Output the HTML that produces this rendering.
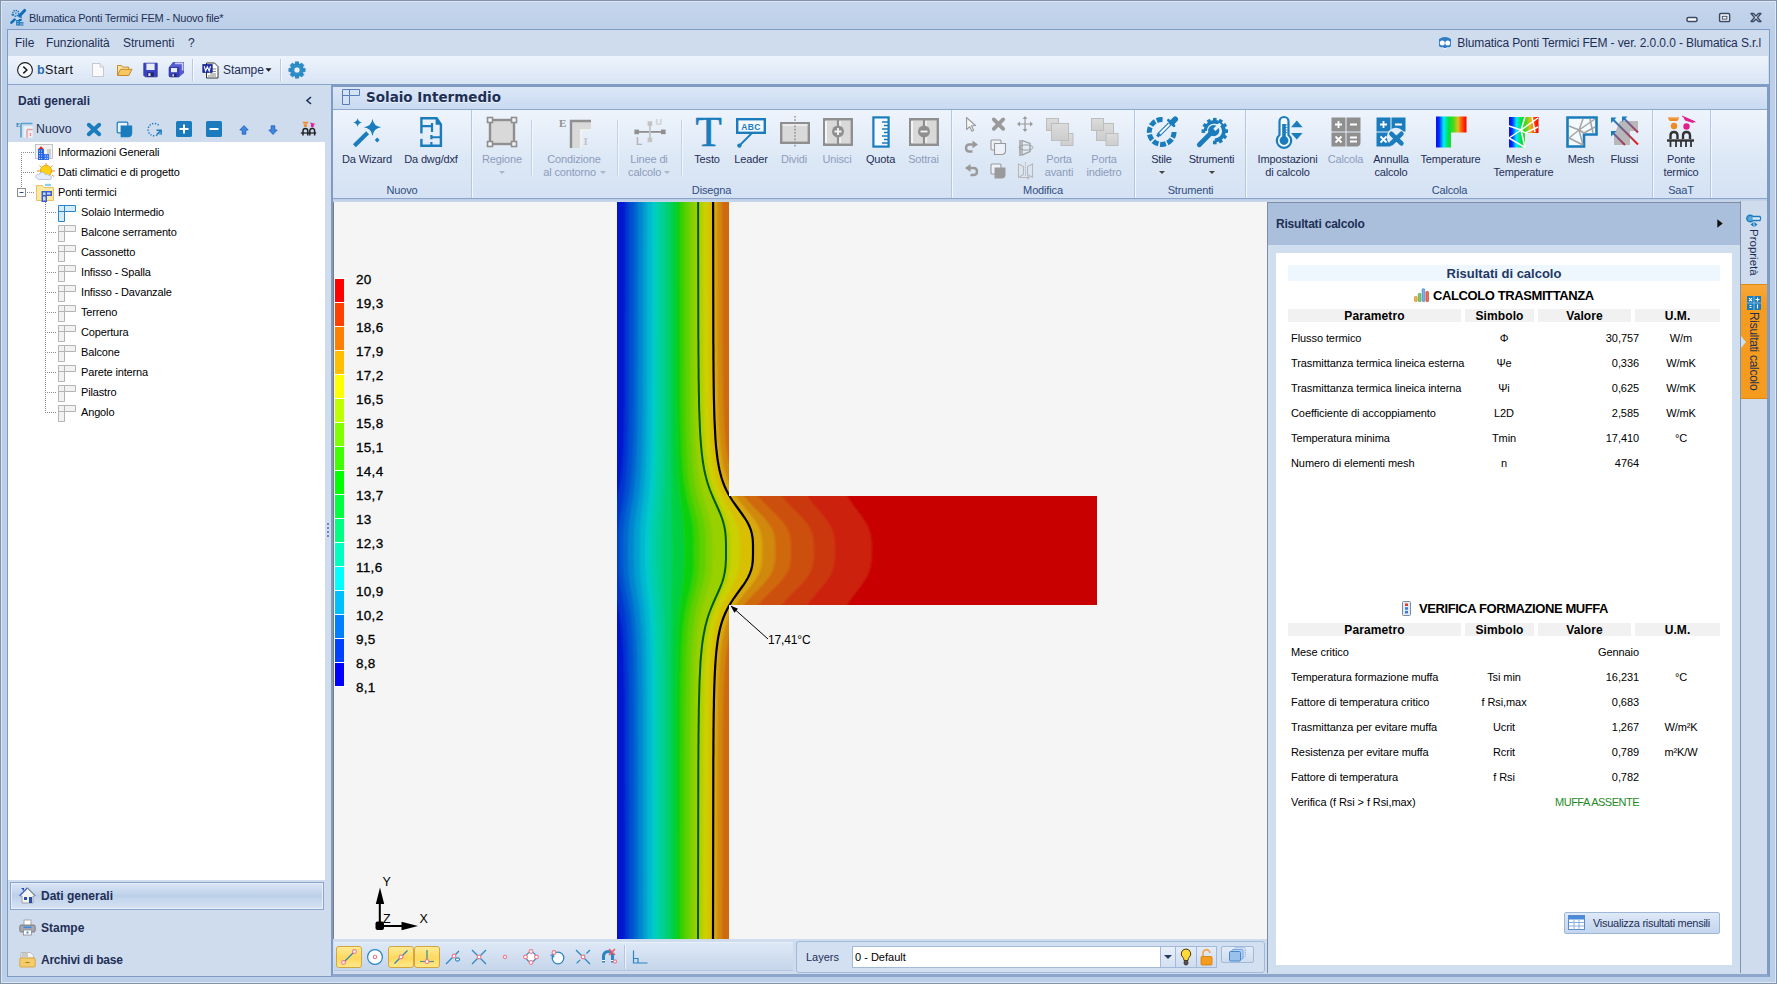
<!DOCTYPE html>
<html lang="it">
<head>
<meta charset="utf-8">
<title>Blumatica Ponti Termici FEM - Nuovo file*</title>
<style>
*{box-sizing:border-box;margin:0;padding:0}
html,body{width:1777px;height:984px;overflow:hidden}
body{position:relative;background:#bdd0e9;font-family:"Liberation Sans",sans-serif;font-size:11px;color:#1e1e1e;letter-spacing:-0.15px}
.abs{position:absolute}
.t{position:absolute;white-space:nowrap;line-height:14px}
.t12{font-size:12px;letter-spacing:0}
svg{position:absolute;overflow:visible}
/* window chrome */
#win{position:absolute;left:0;top:0;width:1777px;height:984px;border:1px solid #8593a8;box-shadow:inset 0 0 0 1px #dbe7f5;background:linear-gradient(#c5d6ed 0,#bccfe8 30px,#bccfe8 100%)}
#frame{position:absolute;left:7px;top:29px;width:1763px;height:948px;border:1px solid #7f9bc4;background:#cfdcee}
#menubar{position:absolute;left:8px;top:30px;width:1761px;height:26px;background:#cfdcee}
#toolbar{position:absolute;left:8px;top:56px;width:1760px;height:28px;background:linear-gradient(#eef4fc,#e3ecf8 50%,#d9e5f4)}
#tbline{position:absolute;left:8px;top:84px;width:1761px;height:1px;background:#8aa4cb}
.menu{color:#1e2f55}
/* left panel */
#left{position:absolute;left:8px;top:85px;width:323px;height:891px;background:#cfdcee}
#tree{position:absolute;left:9px;top:142px;width:316px;height:738px;background:#fff}
.tr{position:absolute;left:0;height:20px;white-space:nowrap;line-height:20px;color:#000}
.nav{position:absolute;left:10px;width:314px;height:28px}
.navb{position:absolute;left:31px;top:6px;font-size:12px;letter-spacing:0;color:#1e2f55;line-height:16px}
/* ribbon */
#main{position:absolute;left:331px;top:84px;width:1439px;height:893px;border-left:2px solid #7f9bc4;border-right:3px solid #809bc3;border-top:3px solid #819cc4;border-bottom:3px solid #8ca6cc;background:#cfdcee}
#hdr{position:absolute;left:333px;top:87px;width:1434px;height:22px;background:linear-gradient(#dbe7f7,#c9daf1)}
#ribbon{position:absolute;left:333px;top:110px;width:1434px;height:88px;background:linear-gradient(#eef4fc 0,#dde8f6 55%,#d5e2f3 100%)}
.rl{position:absolute;text-align:center;white-space:nowrap;line-height:13px;color:#1e2f55;transform:translateX(-50%)}
.rl.dis{color:#8d9cbb}
.gl{position:absolute;top:184px;text-align:center;white-space:nowrap;line-height:13px;color:#2f4d80;transform:translateX(-50%)}
.gs{position:absolute;top:110px;width:2px;height:88px;background:linear-gradient(90deg,#b4c7e1 50%,#f2f7fd 50%)}
.bs{position:absolute;top:120px;width:2px;height:56px;background:linear-gradient(90deg,#c3d2e7 50%,#f2f7fd 50%)}
/* canvas */
#canvas{position:absolute;left:333px;top:202px;width:934px;height:737px;background:#f5f5f5;border-left:1px solid #7c7c7c}
.lg{position:absolute;left:356px;font-size:13.5px;letter-spacing:.3px;-webkit-text-stroke:.3px #000;line-height:14px;color:#000;white-space:nowrap}
/* results */
#rp{position:absolute;left:1267px;top:202px;width:474px;height:771px;background:#d0dff0;border-left:1px solid #7d8ca3;border-top:1px solid #7d8ca3}
#rph{position:absolute;left:1268px;top:203px;width:473px;height:42px;background:#a9bfdc}
#rpw{position:absolute;left:1276px;top:253px;width:456px;height:712px;background:#fff}
.th{position:absolute;height:13px;background:#f1f1f1;text-align:center;font-weight:bold;font-size:12px;letter-spacing:.1px;line-height:14px;color:#000}
.c{position:absolute;white-space:nowrap;line-height:14px;color:#000;letter-spacing:-.08px}
.cc{transform:translateX(-50%)}
.cr{transform:translateX(-100%)}
</style>
</head>
<body>
<div id="win"></div>
<div id="frame"></div>
<!-- title bar -->
<svg style="left:10px;top:9px" width="17" height="17" viewBox="10 9 17 17">
 <circle cx="15.800" cy="13.300" r="2.900" fill="none" stroke="#0d6db8" stroke-width="1.500" stroke-dasharray="1.300 .9"/>
 <circle cx="15.800" cy="13.300" r="1" fill="#0d6db8" opacity=".6"/>
 <path d="M24.600 10.400l-5 5.400" stroke="#0d6db8" stroke-width="3" stroke-linecap="round"/>
 <path d="M19.800 15.500l1.800 2.400" stroke="#0d6db8" stroke-width="1.400"/>
 <path d="M14.600 19.600l-3.200 3" stroke="#0d6db8" stroke-width="2.600" stroke-linecap="round"/>
 <path d="M10.800 14.300l3.200.2-1.200 1.600z" fill="#0d6db8"/>
 <path d="M16.200 20h2.400l.5-1 2.600-.2v2l-2 .4v1h3.800v1.200h-3.800v1h3.800v1.200h-7.300z" fill="#0d6db8"/>
 <rect x="17.300" y="21.200" width="1.200" height="1.100" fill="#cfe0f4"/><rect x="17.300" y="23.300" width="1.200" height="1.100" fill="#cfe0f4"/>
</svg>
<div class="t" style="left:29px;top:11px;color:#1e2f55;letter-spacing:-.22px">Blumatica Ponti Termici FEM - Nuovo file*</div>
<svg style="left:1686px;top:11px" width="78" height="13" viewBox="0 0 78 13">
 <rect x="1" y="6.5" width="10" height="4" rx="1.5" fill="#fff" stroke="#3b4a66" stroke-width="1.5"/>
 <rect x="33.6" y="2.6" width="10" height="8" rx="1.2" fill="#fff" stroke="#3b4a66" stroke-width="1.5"/>
 <rect x="36.3" y="5.3" width="4.6" height="2.8" fill="#fff" stroke="#3b4a66" stroke-width="1"/>
 <path d="M65 2.5l2.5 0 2.5 2.6 2.5-2.6 2.5 0-3.6 4 3.6 4-2.5 0-2.5-2.6-2.5 2.6-2.5 0 3.6-4z" fill="#fff" stroke="#3b4a66" stroke-width="1.4" stroke-linejoin="round"/>
</svg>
<!-- menu bar -->
<div id="menubar"></div>
<div class="t t12 menu" style="left:15px;top:36px">File</div>
<div class="t t12 menu" style="left:46px;top:36px;letter-spacing:-.1px">Funzionalità</div>
<div class="t t12 menu" style="left:123px;top:36px">Strumenti</div>
<div class="t t12 menu" style="left:188px;top:36px">?</div>
<svg style="left:1437px;top:35px" width="16" height="16" viewBox="0 0 16 16">
 <path d="M2 4q6-4 12 0v7q-2 2-4 1l-2 2-2-2q-2 1-4-1z" fill="#2e7cc4"/>
 <circle cx="5.3" cy="8" r="2.5" fill="#fff"/><circle cx="10.7" cy="8" r="2.5" fill="#fff"/>
 <path d="M6 13h4l-2 2z" fill="#e8f0fa"/>
</svg>
<div class="t t12 menu" style="left:1761px;top:36px;transform:translateX(-100%);letter-spacing:-.115px">Blumatica Ponti Termici FEM - ver. 2.0.0.0 - Blumatica S.r.l</div>
<!-- toolbar -->
<div id="toolbar"></div>
<div id="tbline"></div>
<svg style="left:16px;top:61px" width="18" height="18" viewBox="0 0 18 18">
 <circle cx="9" cy="9" r="7.4" fill="#f6f9fd" stroke="#1a1a1a" stroke-width="1.1"/>
 <path d="M7.3 5.6l3.6 3.4-3.6 3.4" fill="none" stroke="#1a1a1a" stroke-width="1.5"/>
</svg>
<div class="t t12" style="left:37px;top:63px;font-size:12.5px;color:#111;letter-spacing:.4px"><b style="color:#2a6cb4">b</b>Start</div>
<svg style="left:91px;top:62px" width="14" height="16" viewBox="0 0 14 16">
 <path d="M1.5 1.5h7.5l3.5 3.5v9.5h-11z" fill="#fafafa" stroke="#c4c8cf" stroke-width="1"/>
 <path d="M9 1.5v3.5h3.5" fill="#e4e6ea" stroke="#c4c8cf" stroke-width=".8"/>
</svg>
<svg style="left:116px;top:63px" width="17" height="14" viewBox="0 0 17 14">
 <path d="M1.5 12.5v-10h4l1.2 1.6h6v2.2" fill="#fbe3a2" stroke="#c98a2c" stroke-width="1"/>
 <path d="M1.5 12.5l3-6.2h11.5l-3.2 6.2z" fill="#f7c765" stroke="#c98a2c" stroke-width="1" stroke-linejoin="round"/>
</svg>
<svg style="left:143px;top:62px" width="15" height="16" viewBox="0 0 15 16">
 <path d="M.8 1.2h13.4v13.6h-12l-1.4-1.4z" fill="#3b43c4" stroke="#2a2f9a" stroke-width=".8"/>
 <rect x="3.4" y="1.6" width="8.2" height="6.4" fill="#e9edf6"/>
 <rect x="4.2" y="10.4" width="6.8" height="4.2" fill="#23266e"/>
 <rect x="5.3" y="11.2" width="2.2" height="2.8" fill="#dfe3ee"/>
</svg>
<svg style="left:168px;top:61px" width="17" height="17" viewBox="0 0 17 17">
 <path d="M5 1h11v11l-5 4h-10v-10z" fill="#555bd0"/>
 <path d="M1 6.5h10v9.5h-8.8l-1.2-1.2z" fill="#3b43c4" stroke="#2a2f9a" stroke-width=".6"/>
 <rect x="3" y="7" width="6" height="4.2" fill="#e9edf6"/>
 <rect x="3.6" y="12.6" width="5" height="3.2" fill="#23266e"/>
 <rect x="4.4" y="13.2" width="1.6" height="2.2" fill="#dfe3ee"/>
 <path d="M7 2.4h7.6v7" fill="none" stroke="#c9ccf2" stroke-width="1.6"/>
</svg>
<div class="abs" style="left:192px;top:59px;width:2px;height:22px;background:linear-gradient(90deg,#b9c9e0 50%,#f6f9fd 50%)"></div>
<svg style="left:202px;top:62px" width="17" height="17" viewBox="0 0 17 17">
 <path d="M4.5 1h8l3.5 3.5v11.5h-11.5z" fill="#fdfdfd" stroke="#222" stroke-width=".9"/>
 <path d="M8 7h6M8 9.5h6M8 12h6M6 14h8" stroke="#555" stroke-width=".7"/>
 <rect x=".8" y="2.4" width="9.4" height="8.2" fill="#1f2fb4" stroke="#0c1470" stroke-width=".6"/>
 <path d="M2.3 4.2l1.3 4.8 1.8-4.2 1.8 4.2 1.3-4.8" fill="none" stroke="#fff" stroke-width="1.1"/>
</svg>
<div class="t t12" style="left:223px;top:63px;color:#1e2f55;font-size:12px;letter-spacing:-.1px">Stampe</div>
<svg style="left:265px;top:68px" width="7" height="4" viewBox="0 0 7 4"><path d="M.5 .3h6l-3 3.4z" fill="#1a1a1a"/></svg>
<div class="abs" style="left:280px;top:59px;width:2px;height:22px;background:linear-gradient(90deg,#b9c9e0 50%,#f6f9fd 50%)"></div>
<svg style="left:288px;top:61px" width="18" height="18" viewBox="0 0 18 18">
 <g fill="#2a93cf" stroke="#1a6ea6" stroke-width=".5">
 <path d="M7.400 .8h3.200l.5 2.600h-4.200z" transform="rotate(0 9 9)"/>
 <path d="M7.400 .8h3.200l.5 2.600h-4.200z" transform="rotate(45 9 9)"/>
 <path d="M7.400 .8h3.200l.5 2.600h-4.200z" transform="rotate(90 9 9)"/>
 <path d="M7.400 .8h3.200l.5 2.600h-4.200z" transform="rotate(135 9 9)"/>
 <path d="M7.400 .8h3.200l.5 2.600h-4.200z" transform="rotate(180 9 9)"/>
 <path d="M7.400 .8h3.200l.5 2.600h-4.200z" transform="rotate(225 9 9)"/>
 <path d="M7.400 .8h3.200l.5 2.600h-4.200z" transform="rotate(270 9 9)"/>
 <path d="M7.400 .8h3.200l.5 2.600h-4.200z" transform="rotate(315 9 9)"/>
 <circle cx="9" cy="9" r="6"/>
 </g>
 <circle cx="9" cy="9" r="3.1" fill="#e9f2fb" stroke="#1a6ea6" stroke-width=".6"/>
</svg>
<!-- left panel -->
<div id="left"></div>
<div class="abs" style="left:325px;top:142px;width:7px;height:738px;background:#cfdcee"></div>
<div class="t t12" style="left:18px;top:94px;font-weight:bold;color:#1e2f55">Dati generali</div>
<svg style="left:305px;top:96px" width="8" height="9" viewBox="0 0 8 9"><path d="M6 1l-4 3.5 4 3.5" fill="none" stroke="#1e2f55" stroke-width="1.6"/></svg>
<!-- left toolbar -->
<svg style="left:16px;top:121px" width="17" height="17" viewBox="0 0 17 17">
 <path d="M5 2.5h11.5M5 2.5v14" stroke="#5aa0d0" stroke-width="1.6" fill="none"/>
 <path d="M7.5 5h9v11.5h-9z" fill="#e4f3fb"/>
 <path d="M11 8.5h5.5M11 8.5v8" stroke="#ef9a9a" stroke-width="1.4" fill="none"/>
 <path d="M13 11h3.5v5.5h-3.5z" fill="#fdeaea"/>
 <text x="0" y="6" font-family="Liberation Serif,serif" font-size="6" font-weight="bold" fill="#2a7ab8">E</text>
 <text x="13.6" y="15" font-family="Liberation Serif,serif" font-size="5" font-weight="bold" fill="#e57373">I</text>
</svg>
<div class="t t12" style="left:36px;top:122px;color:#1e2f55;font-size:12.3px">Nuovo</div>
<svg style="left:86px;top:122px" width="16" height="15" viewBox="0 0 16 15"><path d="M2.800 2.800l10.400 9.400M13.200 2.800l-10.400 9.400" stroke="#1a7cbc" stroke-width="4" stroke-linecap="round"/></svg>
<svg style="left:116px;top:121px" width="17" height="17" viewBox="0 0 17 17">
 <rect x="1.2" y="1.2" width="10.6" height="10.6" rx="1" fill="#eaf3fb" stroke="#1a7cbc" stroke-width="1.2"/>
 <path d="M4.6 4.6h11.6v7.4q0 4.2-4.2 4.2h-7.4z" fill="#1a7cbc"/>
</svg>
<svg style="left:145px;top:121px" width="18" height="17" viewBox="0 0 18 17">
 <path d="M13.6 4.2a6.2 6.2 0 1 0 1 7.6" fill="none" stroke="#1a7cbc" stroke-width="1.5" stroke-dasharray="1.3 1.5"/>
 <path d="M11.5 9.2h4.6v4.6M15.8 9.5l-4 4" fill="none" stroke="#1a7cbc" stroke-width="1.5"/>
</svg>
<svg style="left:176px;top:121px" width="16" height="16" viewBox="0 0 16 16"><rect width="16" height="16" rx="1.6" fill="#1a7cbc"/><path d="M8 3.5v9M3.5 8h9" stroke="#fff" stroke-width="2"/></svg>
<svg style="left:206px;top:121px" width="16" height="16" viewBox="0 0 16 16"><rect width="16" height="16" rx="1.6" fill="#1a7cbc"/><path d="M3.5 8h9" stroke="#fff" stroke-width="2"/></svg>
<svg style="left:239px;top:125px" width="10" height="10" viewBox="0 0 10 10"><path d="M5 .6l4.2 4.4h-2.4v4.2h-3.6v-4.2h-2.4z" fill="#3a8ae0" stroke="#2458b8" stroke-width=".8"/></svg>
<svg style="left:268px;top:125px" width="10" height="10" viewBox="0 0 10 10"><path d="M5 9.4l4.2-4.4h-2.4v-4.2h-3.6v4.2h-2.4z" fill="#3a8ae0" stroke="#2458b8" stroke-width=".8"/></svg>
<svg style="left:300px;top:121px" width="17" height="16" viewBox="0 0 17 16">
 <path d="M2.5 .8h6l-1 2h-4z" fill="#f08a24"/><circle cx="5.4" cy="4.6" r="1.7" fill="#f08a24"/>
 <path d="M10 1.4l6 1.6-4.4 1.2z" fill="#e0208c"/><circle cx="12.4" cy="4.8" r="1.6" fill="#e0208c"/>
 <path d="M3 14.5v-4.5q0-2.6 2.4-2.6t2.4 2.6v4.5M9.8 14.5v-4.5q0-2.6 2.4-2.6t2.4 2.6v4.5" fill="none" stroke="#222" stroke-width="1.5"/>
 <path d="M.8 12h15.4" stroke="#222" stroke-width="1.3"/>
</svg>
<!-- tree -->
<div id="treepad" class="abs" style="left:8px;top:142px;width:1px;height:738px;background:#fff"></div>
<div id="tree">
<svg style="left:0;top:0" width="316" height="280">
 <g stroke="#8a8a8a" stroke-width="1" stroke-dasharray="1 1" fill="none">
  <path d="M12.5 10v36M14 10.500h11M14 30.500h11M18 50.500h7"/>
  <path d="M36.5 60v211M38 70.500h10M38 90.500h10M38 110.500h10M38 130.500h10M38 150.500h10M38 170.500h10M38 190.500h10M38 210.500h10M38 230.500h10M38 250.500h10M38 270.500h10"/>
 </g>
 <rect x="8.5" y="46.5" width="8" height="8" fill="#fff" stroke="#8e8e8e"/><path d="M10.5 50.5h4" stroke="#2a4a9a"/>
 <!-- info icon -->
 <g transform="translate(26,2)">
  <rect x=".5" y=".5" width="17" height="14" fill="#f3f3f3" stroke="#c4c4c4"/>
  <rect x="12" y="5" width="4" height="9" fill="#cfcfcf"/>
  <path d="M6 2.2l3 3h-6z" fill="#e02020"/>
  <rect x="3" y="5" width="6" height="11" fill="#2a66e0"/><rect x="9" y="10" width="5" height="6" fill="#3a76f0"/>
  <path d="M4 7h4M4 9.5h4M4 12h4M4 14.5h4M10 12h3M10 14.5h3" stroke="#bcd4ff" stroke-width="1" stroke-dasharray="1 1"/>
 </g>
 <!-- sun cloud -->
 <g transform="translate(26,21)">
  <g stroke="#f08a18" stroke-width="1"><path d="M11 0v3M4.5 2.5l2 2M17.500 2.5l-2 2M2 8h3M17 8h3M17 12l2 1.5"/></g>
  <circle cx="11" cy="8" r="5.6" fill="#ffd21a" stroke="#f0a010" stroke-width="1"/>
  <path d="M2 15.5q-2.400-1.200-1-3 1-1.600 3-.8 .6-2.600 3.400-2.400 2.400.2 3 2.400 2.400-1 3.800.8 2.800.2 2.400 2.400-.4 1.600-2.400 1.600h-10q-1.400 0-2.200-1z" fill="#e6eefc" stroke="#a8bce4" stroke-width=".8"/>
 </g>
 <!-- folder -->
 <g transform="translate(27,41)">
  <path d="M.5 17.500v-15h6l1.600 2h9.400v13z" fill="#fbe9a0" stroke="#e4c06a"/>
  <rect x="9" y=".8" width="6" height="2.400" fill="#8fd0e8"/>
  <path d="M5.500 8h10.500v5h-5v6h-5.500z" fill="#3a5ec8"/>
  <path d="M7 9.500h2.500v2.500h-2.500zM11 9.500h3.500v2h-3.500zM7 13.500h2.500v4h-2.500z" fill="#c8dcff"/>
 </g>
 <path d="M49.5 63.5h17v6h-11v10h-6z" fill="#d4ebfa" stroke="#2a86c8"/><path d="M55.5 63.5v6M49.5 69.5h6" stroke="#2a86c8" fill="none"/>
 <path d="M49.5 83.5h17v6h-11v10h-6z" fill="#f2f2f2" stroke="#b4b4b4"/><path d="M55.5 83.5v6M49.5 89.5h6" stroke="#b4b4b4" fill="none"/>
 <path d="M49.5 103.5h17v6h-11v10h-6z" fill="#f2f2f2" stroke="#b4b4b4"/><path d="M55.5 103.5v6M49.5 109.5h6" stroke="#b4b4b4" fill="none"/>
 <path d="M49.5 123.5h17v6h-11v10h-6z" fill="#f2f2f2" stroke="#b4b4b4"/><path d="M55.5 123.5v6M49.5 129.5h6" stroke="#b4b4b4" fill="none"/>
 <path d="M49.5 143.5h17v6h-11v10h-6z" fill="#f2f2f2" stroke="#b4b4b4"/><path d="M55.5 143.5v6M49.5 149.5h6" stroke="#b4b4b4" fill="none"/>
 <path d="M49.5 163.5h17v6h-11v10h-6z" fill="#f2f2f2" stroke="#b4b4b4"/><path d="M55.5 163.5v6M49.5 169.5h6" stroke="#b4b4b4" fill="none"/>
 <path d="M49.5 183.5h17v6h-11v10h-6z" fill="#f2f2f2" stroke="#b4b4b4"/><path d="M55.5 183.5v6M49.5 189.5h6" stroke="#b4b4b4" fill="none"/>
 <path d="M49.5 203.5h17v6h-11v10h-6z" fill="#f2f2f2" stroke="#b4b4b4"/><path d="M55.5 203.5v6M49.5 209.5h6" stroke="#b4b4b4" fill="none"/>
 <path d="M49.5 223.5h17v6h-11v10h-6z" fill="#f2f2f2" stroke="#b4b4b4"/><path d="M55.5 223.5v6M49.5 229.5h6" stroke="#b4b4b4" fill="none"/>
 <path d="M49.5 243.5h17v6h-11v10h-6z" fill="#f2f2f2" stroke="#b4b4b4"/><path d="M55.5 243.5v6M49.5 249.5h6" stroke="#b4b4b4" fill="none"/>
 <path d="M49.5 263.5h17v6h-11v10h-6z" fill="#f2f2f2" stroke="#b4b4b4"/><path d="M55.5 263.5v6M49.5 269.5h6" stroke="#b4b4b4" fill="none"/>
</svg>
<div class="tr" style="left:49px;top:0">Informazioni Generali</div>
<div class="tr" style="left:49px;top:20px">Dati climatici e di progetto</div>
<div class="tr" style="left:49px;top:40px">Ponti termici</div>
<div class="tr" style="left:72px;top:60px">Solaio Intermedio</div>
<div class="tr" style="left:72px;top:80px">Balcone serramento</div>
<div class="tr" style="left:72px;top:100px">Cassonetto</div>
<div class="tr" style="left:72px;top:120px">Infisso - Spalla</div>
<div class="tr" style="left:72px;top:140px">Infisso - Davanzale</div>
<div class="tr" style="left:72px;top:160px">Terreno</div>
<div class="tr" style="left:72px;top:180px">Copertura</div>
<div class="tr" style="left:72px;top:200px">Balcone</div>
<div class="tr" style="left:72px;top:220px">Parete interna</div>
<div class="tr" style="left:72px;top:240px">Pilastro</div>
<div class="tr" style="left:72px;top:260px">Angolo</div>
</div>
<!-- splitter -->
<svg style="left:327px;top:523px" width="2" height="14" viewBox="0 0 2 14"><path d="M0 0h2v2h-2zM0 4h2v2h-2zM0 8h2v2h-2zM0 12h2v2h-2z" fill="#7088b8"/></svg>
<!-- nav -->
<div class="nav" style="top:882px;border:1px solid #8aa4cb;background:linear-gradient(#dbe6f5 0,#bccfe9 50%,#c4d5ec 60%,#d6e3f3 100%);box-shadow:inset 0 0 0 1px #e6eefa"></div>
<svg style="left:19px;top:887px" width="17" height="17" viewBox="0 0 17 17">
 <path d="M2 1h3v3z" fill="#2a4ec8"/>
 <path d="M8.500 1.500l7.500 7.500h-2v7h-11v-7h-2z" fill="#f4f4f4" stroke="#9aa0a8" stroke-width="1"/>
 <path d="M8.500 .8l-8 8" stroke="#4a6ed0" stroke-width="1.400" fill="none"/><path d="M8.500 .8l8 8" stroke="#8a9098" stroke-width="1.200" fill="none"/>
 <rect x="10" y="10" width="3" height="6" fill="#2a4ea8"/><rect x="5" y="10" width="3" height="3" fill="#2a4ea8"/>
</svg>
<div class="t t12" style="left:41px;top:889px;font-weight:bold;color:#1e2f55">Dati generali</div>
<svg style="left:19px;top:919px" width="17" height="17" viewBox="0 0 17 17">
 <rect x="5" y="1" width="7" height="6" fill="#fff" stroke="#9a9a9a" stroke-width=".8"/>
 <rect x=".8" y="6" width="15.400" height="7" rx="1.500" fill="#a8a8ac" stroke="#6a6a70" stroke-width=".8"/>
 <rect x="4.500" y="7.500" width="8" height="1.600" fill="#3a8ae0"/>
 <rect x="4.500" y="11" width="8" height="5" fill="#fff" stroke="#8a8a8a" stroke-width=".8"/><rect x="7.500" y="12.500" width="2" height="2" fill="#3a8ae0"/>
</svg>
<div class="t t12" style="left:41px;top:921px;font-weight:bold;color:#1e2f55">Stampe</div>
<svg style="left:19px;top:951px" width="17" height="17" viewBox="0 0 17 17">
 <path d="M2 7v-5.500h9.500l3 3v2.500z" fill="#f4f4f4" stroke="#b0b0b0" stroke-width=".8"/><path d="M4 2v4M6 2v4M8 2v4" stroke="#8a8a8a" stroke-width=".8"/>
 <rect x=".8" y="7" width="15.400" height="9" rx="1" fill="#f4cc6a" stroke="#d4a030" stroke-width=".8"/><path d="M6.500 11.500h4" stroke="#a87818" stroke-width="1"/>
</svg>
<div class="t t12" style="left:41px;top:953px;font-weight:bold;letter-spacing:-.25px;color:#1e2f55">Archivi di base</div>
<!-- main panel -->
<div id="main"></div>
<div id="hdr"></div>
<div class="abs" style="left:333px;top:109px;width:1434px;height:1px;background:#8ea8ce"></div>
<div id="ribbon"></div>
<div class="abs" style="left:333px;top:198px;width:1434px;height:1px;background:#8aa4cb"></div>
<div class="abs" style="left:333px;top:199px;width:1434px;height:3px;background:linear-gradient(#bccde5,#cad8eb)"></div>
<svg style="left:342px;top:89px" width="19" height="16" viewBox="0 0 19 16"><path d="M.5 .5h17v6h-10v9h-7z" fill="#d3e2f5" stroke="#5a7db8"/><path d="M7.500 .5v6M.5 6.500h7" stroke="#5a7db8" fill="none"/></svg>
<div class="t" style="left:366px;top:89px;font:bold 13.5px/16px 'DejaVu Sans','Liberation Sans',sans-serif;letter-spacing:0;color:#1e2f55;text-shadow:0 1px 0 #eef4fc">Solaio Intermedio</div>
<svg style="left:352px;top:117px" width="30" height="31" viewBox="0 0 30 31"><path d="M2.400 28.700l13.200-13" stroke="#1a7cbc" stroke-width="4.200" stroke-linecap="butt"/>
<path d="M20.500 1.800q1 7.400 8.600 8.550-7.600 1.150-8.600 8.550-1-7.400-8.600-8.550 7.600-1.150 8.600-8.550z" fill="#1a7cbc"/>
<path d="M5.600 .9q.5 3.900 4.500 4.500-4 .6-4.500 4.500-.5-3.900-4.500-4.500 4-.6 4.500-4.500z" fill="#1a7cbc"/>
<path d="M25.200 20.600l2.400 2.400-2.400 2.400-2.400-2.400z" fill="#1a7cbc"/></svg>
<div class="rl" style="left:367px;top:153px">Da Wizard</div>
<svg style="left:419px;top:116px" width="24" height="32" viewBox="0 0 24 32"><path d="M2.400 2.300h15.200l4.300 6v21.500h-19.500z" fill="none" stroke="#1a7cbc" stroke-width="2.400" stroke-linejoin="miter"/>
<path d="M16.600 2.300l5.300 6.500h-5.300z" fill="#1a7cbc"/>
<path d="M2.400 10.200h10.600M13 7.100v9M12.400 18.900v4.300M12.400 21.250h9.500M12.400 26v3.800" fill="none" stroke="#1a7cbc" stroke-width="2.200"/>
<path d="M2.400 17.400v5.500" stroke="#e6eef9" stroke-width="3"/></svg>
<div class="rl" style="left:431px;top:153px">Da dwg/dxf</div>
<div class="gl" style="left:402px">Nuovo</div>
<div class="gs" style="left:471px"></div>
<svg style="left:486px;top:116px" width="32" height="32" viewBox="0 0 32 32"><rect x="4" y="4" width="24" height="24" fill="#d9d9d9" stroke="#8f8f8f" stroke-width="2.400"/>
<g fill="#f4f4f4" stroke="#8f8f8f" stroke-width="1.600"><rect x="1.500" y="1.500" width="5" height="5"/><rect x="25.500" y="1.500" width="5" height="5"/><rect x="1.500" y="25.500" width="5" height="5"/><rect x="25.500" y="25.500" width="5" height="5"/></g></svg>
<div class="rl dis" style="left:502px;top:153px">Regione</div>
<svg style="left:499px;top:170.5px" width="6" height="3" viewBox="0 0 6 3"><path d="M0 0h6l-3 3z" fill="#a9b4c8"/></svg>
<div class="bs" style="left:531px"></div>
<svg style="left:559px;top:118px" width="33" height="31" viewBox="0 0 33 31"><path d="M11 2h21v10h-10v18h-11z" fill="#d9d9d9"/><path d="M12 30v-27h20" fill="none" stroke="#8f8f8f" stroke-width="2.400"/>
<path d="M22 30v-18h10" fill="none" stroke="#f4f4f4" stroke-width="1.600"/>
<text x="0" y="9" font-family="Liberation Serif,serif" font-weight="bold" font-size="11" fill="#8f8f8f">E</text>
<text x="24.500" y="26.500" font-family="Liberation Serif,serif" font-weight="bold" font-size="11" fill="#c4c4c4">I</text></svg>
<div class="rl dis" style="left:574px;top:153px">Condizione</div>
<div class="rl dis" style="left:574px;top:166px">al contorno&nbsp;&nbsp;&nbsp;</div>
<svg style="left:599.5px;top:170.5px" width="6" height="3" viewBox="0 0 6 3"><path d="M0 0h6l-3 3z" fill="#a9b4c8"/></svg>
<div class="bs" style="left:617px"></div>
<svg style="left:633px;top:116px" width="34" height="31" viewBox="0 0 34 31"><path d="M3 15.900h28" stroke="#8f8f8f" stroke-width="1.800"/><path d="M16.900 6v20" stroke="#c4c4c4" stroke-width="1.800"/>
<rect x="1.400" y="13.600" width="4.600" height="4.600" fill="#8f8f8f"/><rect x="28" y="13.600" width="4.600" height="4.600" fill="#8f8f8f"/>
<rect x="14.600" y="5.300" width="4.600" height="4.600" fill="#c4c4c4"/><rect x="14.600" y="21.600" width="4.600" height="4.600" fill="#c4c4c4"/>
<text x="22.500" y="8.800" font-family="Liberation Sans,sans-serif" font-weight="bold" font-size="9" fill="#cfcfcf">U</text>
<text x="3" y="28.500" font-family="Liberation Sans,sans-serif" font-weight="bold" font-size="10" fill="#b4b4b4">L</text></svg>
<div class="rl dis" style="left:649px;top:153px">Linee di</div>
<div class="rl dis" style="left:649px;top:166px">calcolo&nbsp;&nbsp;&nbsp;</div>
<svg style="left:664px;top:170.5px" width="6" height="3" viewBox="0 0 6 3"><path d="M0 0h6l-3 3z" fill="#a9b4c8"/></svg>
<div class="bs" style="left:681px"></div>
<svg style="left:694px;top:114px" width="29" height="34" viewBox="0 0 29 34"><text x="14.500" y="32" text-anchor="middle" font-family="Liberation Serif,serif" font-size="43" fill="#1a7cbc" stroke="#1a7cbc" stroke-width=".6">T</text></svg>
<div class="rl" style="left:707px;top:153px">Testo</div>
<svg style="left:735px;top:117px" width="32" height="32" viewBox="0 0 32 32"><rect x="2.200" y="2.200" width="27.600" height="13.600" fill="#f4f9fd" stroke="#1a7cbc" stroke-width="2.400"/>
<text x="16" y="12.800" text-anchor="middle" font-family="Liberation Sans,sans-serif" font-weight="bold" font-size="8.500" fill="#1a7cbc" letter-spacing=".4">ABC</text>
<path d="M17 16l-12.500 12.500" stroke="#1a7cbc" stroke-width="1.800"/><circle cx="4.400" cy="28.600" r="2.200" fill="#1a7cbc"/></svg>
<div class="rl" style="left:751px;top:153px">Leader</div>
<svg style="left:779px;top:115px" width="32" height="34" viewBox="0 0 32 34"><rect x="2.200" y="8.200" width="27.600" height="19.600" fill="#d9d9d9" stroke="#8f8f8f" stroke-width="2.400"/><path d="M3.500 10h25" stroke="#f4f4f4" stroke-width="1.500"/>
<path d="M16 1v32" stroke="#8f8f8f" stroke-width="1.500" stroke-dasharray="1.600 1.600"/></svg>
<div class="rl dis" style="left:794px;top:153px">Dividi</div>
<svg style="left:822px;top:117px" width="32" height="30" viewBox="0 0 32 30"><rect x="2.200" y="2.200" width="27.600" height="25.600" fill="#d9d9d9" stroke="#8f8f8f" stroke-width="2.400"/><path d="M4 4v22M17.800 4v22" stroke="#f4f4f4" stroke-width="2"/>
<path d="M16 2v26" stroke="#8f8f8f" stroke-width="2.200"/><circle cx="16" cy="14.500" r="6" fill="#8f8f8f"/><path d="M12.500 14.500h7M16 11v7" stroke="#f4f4f4" stroke-width="1.800"/></svg>
<div class="rl dis" style="left:837px;top:153px">Unisci</div>
<svg style="left:871px;top:115px" width="20" height="34" viewBox="0 0 20 34"><rect x="2.400" y="2.400" width="15.200" height="29.200" fill="#f4f9fd" stroke="#1a7cbc" stroke-width="2.200"/>
<path d="M11 7h6M13 10.500h4M11 14h6M13 17.500h4M11 21h6M13 24.500h4M11 28h6" stroke="#1a7cbc" stroke-width="1.500"/></svg>
<div class="rl" style="left:880.5px;top:153px">Quota</div>
<svg style="left:908px;top:117px" width="32" height="30" viewBox="0 0 32 30"><rect x="2.200" y="2.200" width="27.600" height="25.600" fill="#d9d9d9" stroke="#8f8f8f" stroke-width="2.400"/><path d="M4 4v22M17.800 4v22" stroke="#f4f4f4" stroke-width="2"/>
<path d="M16 2v26" stroke="#8f8f8f" stroke-width="2.200"/><circle cx="16" cy="14.500" r="6" fill="#8f8f8f"/><path d="M12.500 14.500h7" stroke="#f4f4f4" stroke-width="1.800"/></svg>
<div class="rl dis" style="left:923.5px;top:153px">Sottrai</div>
<div class="gl" style="left:711.5px">Disegna</div>
<div class="gs" style="left:951px"></div>
<svg style="left:963px;top:116px" width="16" height="16" viewBox="0 0 16 16"><path d="M3.500 1.500l9 8-4 .4 2.200 4.400-1.800.9-2.200-4.500-3 2.800z" fill="#f6f6f6" stroke="#9a9a9a" stroke-width="1.100" stroke-linejoin="round"/></svg>
<svg style="left:991px;top:117px" width="15" height="14" viewBox="0 0 15 14"><path d="M2.800 2.400l9.400 9.400M12.200 2.400l-9.400 9.400" stroke="#9a9a9a" stroke-width="3.800" stroke-linecap="round"/></svg>
<svg style="left:1017px;top:116px" width="16" height="16" viewBox="0 0 16 16"><path d="M8 1.500v13M1.500 8h13" stroke="#9a9a9a" stroke-width="1.200"/><path d="M8 0l2.400 3h-4.800zM8 16l2.400-3h-4.800zM0 8l3-2.400v4.800zM16 8l-3-2.400v4.800z" fill="#9a9a9a"/></svg>
<svg style="left:964px;top:140px" width="15" height="15" viewBox="0 0 15 15"><path d="M9 4.500h-3.500q-3.500 0-3.500 3.500t3.500 3.500h3" fill="none" stroke="#9a9a9a" stroke-width="2.400"/><path d="M8.500 .5l5.500 4-5.500 4z" fill="#9a9a9a"/></svg>
<svg style="left:990px;top:139px" width="17" height="17" viewBox="0 0 17 17"><rect x="1" y="1" width="10" height="10" rx="1" fill="#eef2f8" stroke="#9a9a9a" stroke-width="1.100"/><path d="M4.500 4.500h11v7q0 4-4 4h-7z" fill="#eef2f8" stroke="#9a9a9a" stroke-width="1.100"/></svg>
<svg style="left:1017px;top:138.5px" width="16" height="18" viewBox="0 0 16 18"><path d="M5 1.500l8 3v8l-8 3.500z" fill="none" stroke="#9a9a9a" stroke-width="1.200"/><path d="M3 1v16" stroke="#9a9a9a" stroke-width="1.400"/><ellipse cx="9" cy="8.500" rx="7" ry="2.600" fill="none" stroke="#9a9a9a" stroke-width=".9"/></svg>
<svg style="left:964px;top:163px" width="15" height="15" viewBox="0 0 15 15"><path d="M6 5h3.500q3.500 0 3.500 3.500t-3.500 3.500h-3" fill="none" stroke="#9a9a9a" stroke-width="2.400"/><path d="M6.500 1l-5.500 4 5.500 4z" fill="#9a9a9a"/></svg>
<svg style="left:990px;top:162.5px" width="17" height="17" viewBox="0 0 17 17"><rect x="1" y="1" width="10" height="10" rx="1" fill="#eef2f8" stroke="#9a9a9a" stroke-width="1.100"/><path d="M4.500 4.500h11v7q0 4-4 4h-7z" fill="#9a9a9a"/></svg>
<svg style="left:1017px;top:162px" width="17" height="18" viewBox="0 0 17 18"><path d="M1.500 2l5 2.500v8l-5 3zM15.500 2l-5 2.500v8l5 3z" fill="none" stroke="#b8b8b8" stroke-width="1.100"/><path d="M8.500 0v14" stroke="#b8b8b8" stroke-width="1" stroke-dasharray="1.500 1"/><path d="M3 15.500h9M10 13.500l2.500 2-2.500 2" fill="none" stroke="#b8b8b8" stroke-width="1"/></svg>
<svg style="left:1045px;top:117px" width="30" height="30" viewBox="0 0 30 30"><defs><linearGradient id="sqg" x1="0" y1="0" x2="0" y2="1"><stop offset="0" stop-color="#dcdcdc"/><stop offset="1" stop-color="#cdcdcd"/></linearGradient></defs><rect x="1.5" y="1.5" width="12" height="12" fill="url(#sqg)" stroke="#bdbdbd" stroke-width="1"/><rect x="16" y="16.5" width="12" height="12" fill="url(#sqg)" stroke="#bdbdbd" stroke-width="1"/><rect x="6.5" y="6.5" width="17" height="17" fill="url(#sqg)" stroke="#bdbdbd" stroke-width="1"/></svg>
<div class="rl dis" style="left:1059px;top:153px">Porta</div>
<div class="rl dis" style="left:1059px;top:166px">avanti</div>
<svg style="left:1090px;top:117px" width="30" height="30" viewBox="0 0 30 30"><rect x="6.5" y="6.5" width="17" height="17" fill="url(#sqg)" stroke="#bdbdbd" stroke-width="1"/><rect x="1.5" y="1.5" width="12" height="12" fill="url(#sqg)" stroke="#bdbdbd" stroke-width="1"/><rect x="16" y="16.5" width="12" height="12" fill="url(#sqg)" stroke="#bdbdbd" stroke-width="1"/></svg>
<div class="rl dis" style="left:1104px;top:153px">Porta</div>
<div class="rl dis" style="left:1104px;top:166px">indietro</div>
<div class="gl" style="left:1043px">Modifica</div>
<div class="gs" style="left:1134px"></div>
<svg style="left:1146px;top:115px" width="33" height="33" viewBox="0 0 33 33"><path d="M28.100 17A12.400 12.400 0 1 1 17.850 4.790" fill="none" stroke="#1a7cbc" stroke-width="5" stroke-dasharray="5.840 1.730"/>
<path d="M12.600 20l11-11" stroke="#1a7cbc" stroke-width="4.200"/><path d="M13.900 18.700l9.500-9.500" stroke="#f4f9fd" stroke-width="2"/>
<path d="M11.200 21.400l1.800-1.800" stroke="#1a7cbc" stroke-width="3"/>
<path d="M22.400 5.200l5.600 5.600" stroke="#1a7cbc" stroke-width="2.800" stroke-linecap="round"/>
<path d="M26 7.400l3.200-3.200" stroke="#1a7cbc" stroke-width="5.600" stroke-linecap="round"/></svg>
<div class="rl" style="left:1161.5px;top:153px">Stile</div>
<svg style="left:1158.5px;top:170.5px" width="6" height="3" viewBox="0 0 6 3"><path d="M0 0h6l-3 3z" fill="#444"/></svg>
<svg style="left:1196px;top:115px" width="33" height="33" viewBox="0 0 33 33"><rect x="-1.800" y="-13.200" width="3.600" height="3.600" fill="#1a7cbc" transform="translate(18.800 16.100) rotate(-90)"/><rect x="-1.800" y="-13.200" width="3.600" height="3.600" fill="#1a7cbc" transform="translate(18.800 16.100) rotate(-60)"/><rect x="-1.800" y="-13.200" width="3.600" height="3.600" fill="#1a7cbc" transform="translate(18.800 16.100) rotate(-30)"/><rect x="-1.800" y="-13.200" width="3.600" height="3.600" fill="#1a7cbc" transform="translate(18.800 16.100) rotate(0)"/><rect x="-1.800" y="-13.200" width="3.600" height="3.600" fill="#1a7cbc" transform="translate(18.800 16.100) rotate(30)"/><rect x="-1.800" y="-13.200" width="3.600" height="3.600" fill="#1a7cbc" transform="translate(18.800 16.100) rotate(60)"/><rect x="-1.800" y="-13.200" width="3.600" height="3.600" fill="#1a7cbc" transform="translate(18.800 16.100) rotate(90)"/><rect x="-1.800" y="-13.200" width="3.600" height="3.600" fill="#1a7cbc" transform="translate(18.800 16.100) rotate(120)"/><rect x="-1.800" y="-13.200" width="3.600" height="3.600" fill="#1a7cbc" transform="translate(18.800 16.100) rotate(150)"/><rect x="-1.800" y="-13.200" width="3.600" height="3.600" fill="#1a7cbc" transform="translate(18.800 16.100) rotate(180)"/><path d="M9.650 16.100A9.150 9.150 0 1 1 18.800 25.250" fill="none" stroke="#1a7cbc" stroke-width="3.700"/>
<circle cx="17.900" cy="15.700" r="7" fill="#e7eff9"/><path d="M5 28l9.500-9.500" stroke="#e7eff9" stroke-width="7.400"/>
<path d="M3.300 29.700l11.600-11.600" stroke="#1a7cbc" stroke-width="4.800" stroke-linecap="round"/>
<circle cx="17.700" cy="15.600" r="5.600" fill="#1a7cbc"/>
<path d="M18.400 14.900l6-6" stroke="#e7eff9" stroke-width="3.200"/></svg>
<div class="rl" style="left:1211.5px;top:153px">Strumenti</div>
<svg style="left:1208.5px;top:170.5px" width="6" height="3" viewBox="0 0 6 3"><path d="M0 0h6l-3 3z" fill="#444"/></svg>
<div class="gl" style="left:1190.5px">Strumenti</div>
<div class="gs" style="left:1245px"></div>
<svg style="left:1274px;top:115px" width="30" height="34" viewBox="0 0 30 34"><path d="M5.500 20v-13.500a4.500 4.500 0 0 1 9 0v13.500a7.200 7.200 0 1 1-9 0z" fill="#f4f9fd" stroke="#1a7cbc" stroke-width="2.200"/>
<circle cx="10" cy="25.500" r="4.400" fill="#1a7cbc"/><rect x="8.200" y="9" width="3.600" height="15" fill="#1a7cbc"/>
<path d="M11 10h2.500M11 12.500h2.500M11 15h2.500M11 17.500h2.500" stroke="#1a7cbc" stroke-width=".8"/>
<path d="M22.800 5.600l5.800 6.600h-11.600zM22.800 24.600l5.800-6.600h-11.600z" fill="#1a7cbc"/></svg>
<div class="rl" style="left:1287.5px;top:153px">Impostazioni</div>
<div class="rl" style="left:1287.5px;top:166px">di calcolo</div>
<svg style="left:1331px;top:117px" width="30" height="30" viewBox="0 0 30 30"><path d="M.5 .5h14v14h-14zM15.500 .5h14v14h-14zM.5 15.500h14v14h-14zM15.500 15.500h14v10q0 4-4 4h-10z" fill="#8f8f8f"/>
<g stroke="#fff" stroke-width="1.800"><path d="M4 7.500h7M7.500 4v7M19 7.500h7M4.500 19.500l6 6M10.500 19.500l-6 6M19 20.500h7M19 24.500h7"/></g></svg>
<div class="rl dis" style="left:1345.5px;top:153px">Calcola</div>
<svg style="left:1376px;top:117px" width="30" height="30" viewBox="0 0 30 30"><path d="M.5 .5h14v14h-14zM15.500 .5h14v14h-14zM.5 15.500h14v14h-14z" fill="#1a7cbc"/>
<g stroke="#fff" stroke-width="1.800"><path d="M4 7.500h7M7.500 4v7M19 7.500h7M4.500 19.500l6 6M10.500 19.500l-6 6"/></g><circle cx="19.900" cy="20" r="9.200" fill="#e3ecf8"/><path d="M15.400 16.800l10 9.600M25.400 16.800l-10 9.600" stroke="#1a7cbc" stroke-width="4.600" stroke-linecap="round"/></svg>
<div class="rl" style="left:1391px;top:153px">Annulla</div>
<div class="rl" style="left:1391px;top:166px">calcolo</div>
<svg style="left:1436px;top:116px" width="31" height="32" viewBox="0 0 31 32"><defs><linearGradient id="rb"><stop offset="0" stop-color="#1010e8"/><stop offset=".1" stop-color="#0028ff"/><stop offset=".25" stop-color="#00e8ff"/><stop offset=".42" stop-color="#00e040"/><stop offset=".58" stop-color="#50d818"/><stop offset=".72" stop-color="#e0c020"/><stop offset=".86" stop-color="#ff4800"/><stop offset="1" stop-color="#f80000"/></linearGradient></defs>
<path d="M0 .5h30.500v16h-15.500v15h-15z" fill="url(#rb)"/></svg>
<div class="rl" style="left:1450.5px;top:153px">Temperature</div>
<svg style="left:1508px;top:116px" width="32" height="32" viewBox="0 0 32 32"><path d="M1 1h29.500v16h-13.500v14.500h-16z" fill="url(#rb)"/>
<g stroke="#fff" stroke-width="1.500" fill="none"><path d="M1 10l12 4 4-13M13 14l17-12M13 14l4 3M13 14l-12 8M13 14l4 17.500M17 17l13-6M1 22l16 9.500M24 1l3 15"/></g></svg>
<div class="rl" style="left:1523.5px;top:153px">Mesh e</div>
<div class="rl" style="left:1523.5px;top:166px">Temperature</div>
<svg style="left:1566px;top:116px" width="32" height="32" viewBox="0 0 32 32"><path d="M1.500 1.500h29v17h-12.500v12h-16.500z" fill="#f4f9fd" stroke="#1a7cbc" stroke-width="2.600"/>
<g stroke="#a4a4a4" stroke-width="1.500" fill="none"><path d="M3 10l10 4 4-11M13 14l16-11M13 14l5 3M13 14l-10 8M13 14l4 15M18 17l11-6M3 22l14 7M24 3l3 14"/></g></svg>
<div class="rl" style="left:1581px;top:153px">Mesh</div>
<svg style="left:1610px;top:116px" width="30" height="32" viewBox="0 0 30 32"><defs><linearGradient id="fl" x1="0" y1="0" x2="1" y2="1"><stop offset="0" stop-color="#1a7cbc"/><stop offset=".45" stop-color="#7a5a90"/><stop offset="1" stop-color="#f01010"/></linearGradient></defs>
<path d="M10 5h18v10l-8 0 0 14h-16v-10z" fill="#b8b8b8"/>
<g stroke="url(#fl)" stroke-width="2" fill="none"><path d="M3 3.500l25 25M14 2.500l14 14M3 17l12 12"/></g>
<path d="M1 1.500h5.500l-5.500 5.500zM12 .5h5.500l-5.500 5.500zM1 15h5.500l-5.500 5.500z" fill="#1a7cbc"/></svg>
<div class="rl" style="left:1624.5px;top:153px">Flussi</div>
<div class="gl" style="left:1449.5px">Calcola</div>
<div class="gs" style="left:1652px"></div>
<svg style="left:1666px;top:115px" width="32" height="34" viewBox="0 0 32 34"><path d="M2 3.500h11l-1.800 2.500h-7.400z" fill="#f08a24"/><path d="M2 3h11" stroke="#f08a24" stroke-width="1.200"/><circle cx="8" cy="11" r="3.200" fill="#f08a24"/>
<path d="M17 1.500l12 5-2 1.500-8-2.500z" fill="#e0208c"/><path d="M16 1l13.500 6" stroke="#e0208c" stroke-width="1"/><circle cx="20.500" cy="11.500" r="3.200" fill="#e0208c"/>
<path d="M4.500 24v-3.500q0-3.500 3.500-3.500t3.500 3.500v3.500M17 24v-3.500q0-3.500 3.500-3.500t3.500 3.500v3.500" fill="none" stroke="#333" stroke-width="2.400"/>
<path d="M1 25.500h27" stroke="#333" stroke-width="2.400"/><path d="M4.500 26v6M10 26v6M15 26v6M20 26v6M25 26v6" stroke="#333" stroke-width="1.800"/></svg>
<div class="rl" style="left:1681px;top:153px">Ponte</div>
<div class="rl" style="left:1681px;top:166px">termico</div>
<div class="gl" style="left:1681px">SaaT</div>
<div class="gs" style="left:1710px"></div>
<!-- canvas -->
<div id="canvas"></div>
<svg style="left:334px;top:201px" width="932" height="738" viewBox="334 201 932 738">
<rect x="335" y="278" width="9" height="24" fill="#ff0000"/><rect x="335" y="302" width="9" height="24" fill="#ff4000"/><rect x="335" y="326" width="9" height="24" fill="#ff8000"/><rect x="335" y="350" width="9" height="24" fill="#ffbf00"/><rect x="335" y="374" width="9" height="24" fill="#ffff00"/><rect x="335" y="398" width="9" height="24" fill="#bfff00"/><rect x="335" y="422" width="9" height="24" fill="#80ff00"/><rect x="335" y="446" width="9" height="24" fill="#40ff00"/><rect x="335" y="470" width="9" height="24" fill="#00ff00"/><rect x="335" y="494" width="9" height="24" fill="#00ff40"/><rect x="335" y="518" width="9" height="24" fill="#00ff80"/><rect x="335" y="542" width="9" height="24" fill="#00ffbf"/><rect x="335" y="566" width="9" height="24" fill="#00ffff"/><rect x="335" y="590" width="9" height="24" fill="#00bfff"/><rect x="335" y="614" width="9" height="24" fill="#0080ff"/><rect x="335" y="638" width="9" height="24" fill="#0040ff"/><rect x="335" y="662" width="9" height="24" fill="#0000ff"/><g stroke="#ffffff" stroke-width="1"><path d="M335 278.5h13"/><path d="M335 302.5h13"/><path d="M335 326.5h13"/><path d="M335 350.5h13"/><path d="M335 374.5h13"/><path d="M335 398.5h13"/><path d="M335 422.5h13"/><path d="M335 446.5h13"/><path d="M335 470.5h13"/><path d="M335 494.5h13"/><path d="M335 518.5h13"/><path d="M335 542.5h13"/><path d="M335 566.5h13"/><path d="M335 590.5h13"/><path d="M335 614.5h13"/><path d="M335 638.5h13"/><path d="M335 662.5h13"/><path d="M335 686.5h13"/></g>
<defs><clipPath id="geo"><path d="M617 202h112v294h368v109h-368v334h-112z"/></clipPath><filter id="sm" x="-5%" y="-5%" width="110%" height="110%"><feGaussianBlur stdDeviation="0.9 0.3"/></filter></defs>
<g clip-path="url(#geo)">
<rect x="600" y="190" width="30" height="760" fill="#0018d0"/><g filter="url(#sm)">
<path d="M617.0 194.0 617.0 330.0 617.0 334.0 617.0 338.0 617.0 342.0 617.0 346.0 617.0 350.0 617.0 354.0 617.0 358.0 617.0 362.0 617.0 366.0 617.0 370.0 617.0 374.0 617.0 378.0 617.0 382.0 617.0 386.0 617.0 390.0 617.0 394.0 617.0 398.0 617.0 402.0 617.0 406.0 617.0 410.0 617.0 414.0 617.0 418.0 617.0 422.0 617.0 426.0 617.0 430.0 617.0 434.0 617.0 438.0 617.0 442.0 617.0 446.0 617.0 450.0 617.0 454.0 617.0 458.0 617.0 462.0 617.0 466.0 617.0 470.0 617.0 474.0 617.0 478.0 617.0 482.0 617.0 486.0 617.0 490.0 617.0 494.0 617.0 498.0 617.0 502.0 617.0 506.0 617.0 510.0 617.0 514.0 617.0 518.0 617.0 522.0 617.0 526.0 617.0 530.0 617.0 534.0 617.0 538.0 617.0 542.0 617.0 546.0 617.0 550.0 617.0 554.0 617.0 558.0 617.0 562.0 617.0 566.0 617.0 570.0 617.0 574.0 617.0 578.0 617.0 582.0 617.0 586.0 617.0 590.0 617.0 594.0 617.0 598.0 617.0 602.0 617.0 606.0 617.0 610.0 617.0 614.0 617.0 618.0 617.0 622.0 617.0 626.0 617.0 630.0 617.0 634.0 617.0 638.0 617.0 642.0 617.0 646.0 617.0 650.0 617.0 654.0 617.0 658.0 617.0 662.0 617.0 666.0 617.0 670.0 617.0 674.0 617.0 678.0 617.0 682.0 617.0 686.0 617.0 690.0 617.0 694.0 617.0 698.0 617.0 702.0 617.0 706.0 617.0 710.0 617.0 714.0 617.0 718.0 617.0 722.0 617.0 726.0 617.0 730.0 617.0 734.0 617.0 738.0 617.0 742.0 617.0 746.0 617.0 750.0 617.0 754.0 617.0 758.0 617.0 762.0 617.0 766.0 617.0 770.0 617.0 947.0 L1110 939 L1110 202z" fill="#0018d0"/>
<path d="M625.0 194.0 624.9 330.0 624.9 334.0 624.8 338.0 624.8 342.0 624.8 346.0 624.8 350.0 624.8 354.0 624.8 358.0 624.8 362.0 624.8 366.0 624.7 370.0 624.7 374.0 624.7 378.0 624.7 382.0 624.7 386.0 624.6 390.0 624.6 394.0 624.6 398.0 624.5 402.0 624.5 406.0 624.4 410.0 624.4 414.0 624.3 418.0 624.2 422.0 624.2 426.0 624.1 430.0 624.0 434.0 623.8 438.0 623.7 442.0 623.5 446.0 623.4 450.0 623.2 454.0 622.9 458.0 622.6 462.0 622.3 466.0 621.9 470.0 621.5 474.0 621.0 478.0 620.4 482.0 619.7 486.0 619.0 490.0 618.1 494.0 617.1 498.0 616.1 502.0 615.0 506.0 613.9 510.0 612.8 514.0 611.8 518.0 610.9 522.0 610.2 526.0 609.7 530.0 609.4 534.0 609.1 538.0 609.0 542.0 609.0 546.0 609.0 550.0 609.0 554.0 609.0 558.0 609.1 562.0 609.3 566.0 609.6 570.0 610.1 574.0 610.7 578.0 611.6 582.0 612.5 586.0 613.6 590.0 614.7 594.0 615.8 598.0 616.9 602.0 617.9 606.0 618.7 610.0 619.5 614.0 620.2 618.0 620.9 622.0 621.4 626.0 621.8 630.0 622.2 634.0 622.6 638.0 622.9 642.0 623.1 646.0 623.3 650.0 623.5 654.0 623.7 658.0 623.8 662.0 623.9 666.0 624.0 670.0 624.1 674.0 624.2 678.0 624.3 682.0 624.3 686.0 624.4 690.0 624.5 694.0 624.5 698.0 624.5 702.0 624.6 706.0 624.6 710.0 624.6 714.0 624.7 718.0 624.7 722.0 624.7 726.0 624.7 730.0 624.8 734.0 624.8 738.0 624.8 742.0 624.8 746.0 624.8 750.0 624.8 754.0 624.8 758.0 624.8 762.0 624.9 766.0 624.9 770.0 625.0 947.0 L1110 939 L1110 202z" fill="#0535d0"/>
<path d="M629.0 194.0 628.9 330.0 628.9 334.0 628.9 338.0 628.9 342.0 628.9 346.0 628.9 350.0 628.9 354.0 628.9 358.0 628.8 362.0 628.8 366.0 628.8 370.0 628.8 374.0 628.8 378.0 628.8 382.0 628.8 386.0 628.7 390.0 628.7 394.0 628.7 398.0 628.7 402.0 628.6 406.0 628.6 410.0 628.6 414.0 628.5 418.0 628.5 422.0 628.4 426.0 628.4 430.0 628.3 434.0 628.2 438.0 628.1 442.0 628.0 446.0 627.9 450.0 627.7 454.0 627.6 458.0 627.4 462.0 627.2 466.0 626.9 470.0 626.6 474.0 626.2 478.0 625.8 482.0 625.4 486.0 624.8 490.0 624.2 494.0 623.6 498.0 622.9 502.0 622.1 506.0 621.4 510.0 620.6 514.0 619.9 518.0 619.3 522.0 618.8 526.0 618.5 530.0 618.2 534.0 618.1 538.0 618.0 542.0 618.0 546.0 618.0 550.0 618.0 554.0 618.0 558.0 618.1 562.0 618.2 566.0 618.4 570.0 618.7 574.0 619.2 578.0 619.8 582.0 620.4 586.0 621.2 590.0 621.9 594.0 622.7 598.0 623.4 602.0 624.1 606.0 624.7 610.0 625.3 614.0 625.7 618.0 626.2 622.0 626.5 626.0 626.8 630.0 627.1 634.0 627.3 638.0 627.5 642.0 627.7 646.0 627.8 650.0 628.0 654.0 628.1 658.0 628.2 662.0 628.3 666.0 628.3 670.0 628.4 674.0 628.5 678.0 628.5 682.0 628.6 686.0 628.6 690.0 628.6 694.0 628.7 698.0 628.7 702.0 628.7 706.0 628.7 710.0 628.8 714.0 628.8 718.0 628.8 722.0 628.8 726.0 628.8 730.0 628.8 734.0 628.8 738.0 628.9 742.0 628.9 746.0 628.9 750.0 628.9 754.0 628.9 758.0 628.9 762.0 628.9 766.0 628.9 770.0 629.0 947.0 L1110 939 L1110 202z" fill="#0550d0"/>
<path d="M634.0 194.0 633.9 330.0 633.9 334.0 633.9 338.0 633.9 342.0 633.9 346.0 633.9 350.0 633.9 354.0 633.9 358.0 633.8 362.0 633.8 366.0 633.8 370.0 633.8 374.0 633.8 378.0 633.8 382.0 633.8 386.0 633.7 390.0 633.7 394.0 633.7 398.0 633.7 402.0 633.6 406.0 633.6 410.0 633.5 414.0 633.5 418.0 633.5 422.0 633.4 426.0 633.3 430.0 633.3 434.0 633.2 438.0 633.1 442.0 633.0 446.0 632.8 450.0 632.7 454.0 632.5 458.0 632.3 462.0 632.1 466.0 631.8 470.0 631.5 474.0 631.1 478.0 630.7 482.0 630.2 486.0 629.7 490.0 629.1 494.0 628.4 498.0 627.6 502.0 626.9 506.0 626.1 510.0 625.3 514.0 624.6 518.0 624.0 522.0 623.5 526.0 623.1 530.0 622.9 534.0 622.7 538.0 622.6 542.0 622.6 546.0 622.6 550.0 622.6 554.0 622.6 558.0 622.7 562.0 622.8 566.0 623.0 570.0 623.4 574.0 623.8 578.0 624.4 582.0 625.1 586.0 625.9 590.0 626.7 594.0 627.5 598.0 628.2 602.0 628.9 606.0 629.5 610.0 630.1 614.0 630.6 618.0 631.0 622.0 631.4 626.0 631.7 630.0 632.0 634.0 632.3 638.0 632.5 642.0 632.6 646.0 632.8 650.0 632.9 654.0 633.0 658.0 633.1 662.0 633.2 666.0 633.3 670.0 633.4 674.0 633.4 678.0 633.5 682.0 633.5 686.0 633.6 690.0 633.6 694.0 633.6 698.0 633.7 702.0 633.7 706.0 633.7 710.0 633.7 714.0 633.8 718.0 633.8 722.0 633.8 726.0 633.8 730.0 633.8 734.0 633.8 738.0 633.8 742.0 633.9 746.0 633.9 750.0 633.9 754.0 633.9 758.0 633.9 762.0 633.9 766.0 633.9 770.0 634.0 947.0 L1110 939 L1110 202z" fill="#0568d0"/>
<path d="M638.0 194.0 637.9 330.0 637.9 334.0 637.9 338.0 637.9 342.0 637.9 346.0 637.9 350.0 637.9 354.0 637.9 358.0 637.9 362.0 637.8 366.0 637.8 370.0 637.8 374.0 637.8 378.0 637.8 382.0 637.8 386.0 637.8 390.0 637.7 394.0 637.7 398.0 637.7 402.0 637.7 406.0 637.6 410.0 637.6 414.0 637.6 418.0 637.5 422.0 637.5 426.0 637.4 430.0 637.3 434.0 637.3 438.0 637.2 442.0 637.1 446.0 637.0 450.0 636.8 454.0 636.7 458.0 636.5 462.0 636.3 466.0 636.1 470.0 635.8 474.0 635.5 478.0 635.1 482.0 634.7 486.0 634.2 490.0 633.7 494.0 633.1 498.0 632.4 502.0 631.7 506.0 631.0 510.0 630.4 514.0 629.7 518.0 629.2 522.0 628.8 526.0 628.4 530.0 628.2 534.0 628.1 538.0 628.0 542.0 628.0 546.0 628.0 550.0 628.0 554.0 628.0 558.0 628.1 562.0 628.2 566.0 628.4 570.0 628.7 574.0 629.1 578.0 629.6 582.0 630.2 586.0 630.9 590.0 631.6 594.0 632.3 598.0 632.9 602.0 633.5 606.0 634.1 610.0 634.6 614.0 635.0 618.0 635.4 622.0 635.7 626.0 636.0 630.0 636.3 634.0 636.5 638.0 636.7 642.0 636.8 646.0 636.9 650.0 637.1 654.0 637.2 658.0 637.3 662.0 637.3 666.0 637.4 670.0 637.5 674.0 637.5 678.0 637.6 682.0 637.6 686.0 637.6 690.0 637.7 694.0 637.7 698.0 637.7 702.0 637.7 706.0 637.8 710.0 637.8 714.0 637.8 718.0 637.8 722.0 637.8 726.0 637.8 730.0 637.8 734.0 637.9 738.0 637.9 742.0 637.9 746.0 637.9 750.0 637.9 754.0 637.9 758.0 637.9 762.0 637.9 766.0 637.9 770.0 638.0 947.0 L1110 939 L1110 202z" fill="#0585d0"/>
<path d="M643.0 194.0 642.9 330.0 642.9 334.0 642.9 338.0 642.9 342.0 642.9 346.0 642.9 350.0 642.9 354.0 642.9 358.0 642.9 362.0 642.9 366.0 642.9 370.0 642.8 374.0 642.8 378.0 642.8 382.0 642.8 386.0 642.8 390.0 642.8 394.0 642.7 398.0 642.7 402.0 642.7 406.0 642.7 410.0 642.6 414.0 642.6 418.0 642.6 422.0 642.5 426.0 642.5 430.0 642.4 434.0 642.3 438.0 642.3 442.0 642.2 446.0 642.1 450.0 642.0 454.0 641.8 458.0 641.7 462.0 641.5 466.0 641.3 470.0 641.0 474.0 640.7 478.0 640.4 482.0 640.0 486.0 639.6 490.0 639.1 494.0 638.5 498.0 637.9 502.0 637.3 506.0 636.7 510.0 636.1 514.0 635.5 518.0 635.0 522.0 634.6 526.0 634.3 530.0 634.1 534.0 634.0 538.0 633.9 542.0 633.9 546.0 633.9 550.0 633.9 554.0 633.9 558.0 634.0 562.0 634.1 566.0 634.2 570.0 634.5 574.0 634.9 578.0 635.4 582.0 635.9 586.0 636.5 590.0 637.1 594.0 637.8 598.0 638.4 602.0 638.9 606.0 639.4 610.0 639.9 614.0 640.3 618.0 640.6 622.0 640.9 626.0 641.2 630.0 641.4 634.0 641.6 638.0 641.8 642.0 641.9 646.0 642.0 650.0 642.1 654.0 642.2 658.0 642.3 662.0 642.4 666.0 642.5 670.0 642.5 674.0 642.6 678.0 642.6 682.0 642.6 686.0 642.7 690.0 642.7 694.0 642.7 698.0 642.7 702.0 642.8 706.0 642.8 710.0 642.8 714.0 642.8 718.0 642.8 722.0 642.8 726.0 642.8 730.0 642.9 734.0 642.9 738.0 642.9 742.0 642.9 746.0 642.9 750.0 642.9 754.0 642.9 758.0 642.9 762.0 642.9 766.0 642.9 770.0 643.0 947.0 L1110 939 L1110 202z" fill="#05a0d0"/>
<path d="M647.0 194.0 646.9 330.0 646.9 334.0 646.9 338.0 646.9 342.0 646.9 346.0 646.9 350.0 646.9 354.0 646.9 358.0 646.9 362.0 646.9 366.0 646.9 370.0 646.9 374.0 646.9 378.0 646.9 382.0 646.8 386.0 646.8 390.0 646.8 394.0 646.8 398.0 646.8 402.0 646.8 406.0 646.7 410.0 646.7 414.0 646.7 418.0 646.6 422.0 646.6 426.0 646.6 430.0 646.5 434.0 646.5 438.0 646.4 442.0 646.3 446.0 646.3 450.0 646.2 454.0 646.1 458.0 645.9 462.0 645.8 466.0 645.6 470.0 645.4 474.0 645.2 478.0 644.9 482.0 644.6 486.0 644.2 490.0 643.8 494.0 643.4 498.0 642.9 502.0 642.4 506.0 641.9 510.0 641.4 514.0 641.0 518.0 640.6 522.0 640.3 526.0 640.0 530.0 639.9 534.0 639.8 538.0 639.7 542.0 639.7 546.0 639.7 550.0 639.7 554.0 639.7 558.0 639.7 562.0 639.8 566.0 640.0 570.0 640.2 574.0 640.5 578.0 640.9 582.0 641.3 586.0 641.8 590.0 642.3 594.0 642.8 598.0 643.3 602.0 643.7 606.0 644.1 610.0 644.5 614.0 644.8 618.0 645.1 622.0 645.3 626.0 645.6 630.0 645.7 634.0 645.9 638.0 646.0 642.0 646.1 646.0 646.2 650.0 646.3 654.0 646.4 658.0 646.5 662.0 646.5 666.0 646.6 670.0 646.6 674.0 646.6 678.0 646.7 682.0 646.7 686.0 646.7 690.0 646.8 694.0 646.8 698.0 646.8 702.0 646.8 706.0 646.8 710.0 646.8 714.0 646.8 718.0 646.9 722.0 646.9 726.0 646.9 730.0 646.9 734.0 646.9 738.0 646.9 742.0 646.9 746.0 646.9 750.0 646.9 754.0 646.9 758.0 646.9 762.0 646.9 766.0 646.9 770.0 647.0 947.0 L1110 939 L1110 202z" fill="#05b8d0"/>
<path d="M652.0 194.0 651.9 330.0 651.9 334.0 651.9 338.0 651.9 342.0 651.9 346.0 651.9 350.0 651.9 354.0 651.9 358.0 651.9 362.0 651.9 366.0 651.9 370.0 651.9 374.0 651.9 378.0 651.9 382.0 651.8 386.0 651.8 390.0 651.8 394.0 651.8 398.0 651.8 402.0 651.8 406.0 651.7 410.0 651.7 414.0 651.7 418.0 651.7 422.0 651.6 426.0 651.6 430.0 651.5 434.0 651.5 438.0 651.4 442.0 651.4 446.0 651.3 450.0 651.2 454.0 651.1 458.0 651.0 462.0 650.8 466.0 650.7 470.0 650.5 474.0 650.3 478.0 650.0 482.0 649.7 486.0 649.4 490.0 649.0 494.0 648.6 498.0 648.2 502.0 647.7 506.0 647.2 510.0 646.7 514.0 646.3 518.0 645.9 522.0 645.6 526.0 645.4 530.0 645.3 534.0 645.2 538.0 645.1 542.0 645.1 546.0 645.1 550.0 645.1 554.0 645.1 558.0 645.1 562.0 645.2 566.0 645.4 570.0 645.6 574.0 645.9 578.0 646.2 582.0 646.6 586.0 647.1 590.0 647.6 594.0 648.0 598.0 648.5 602.0 648.9 606.0 649.3 610.0 649.6 614.0 649.9 618.0 650.2 622.0 650.4 626.0 650.6 630.0 650.8 634.0 650.9 638.0 651.1 642.0 651.2 646.0 651.3 650.0 651.4 654.0 651.4 658.0 651.5 662.0 651.5 666.0 651.6 670.0 651.6 674.0 651.7 678.0 651.7 682.0 651.7 686.0 651.7 690.0 651.8 694.0 651.8 698.0 651.8 702.0 651.8 706.0 651.8 710.0 651.8 714.0 651.9 718.0 651.9 722.0 651.9 726.0 651.9 730.0 651.9 734.0 651.9 738.0 651.9 742.0 651.9 746.0 651.9 750.0 651.9 754.0 651.9 758.0 651.9 762.0 651.9 766.0 651.9 770.0 652.0 947.0 L1110 939 L1110 202z" fill="#05ccc8"/>
<path d="M656.0 194.0 656.0 330.0 656.0 334.0 656.0 338.0 655.9 342.0 655.9 346.0 655.9 350.0 655.9 354.0 655.9 358.0 655.9 362.0 655.9 366.0 655.9 370.0 655.9 374.0 655.9 378.0 655.9 382.0 655.9 386.0 655.9 390.0 655.9 394.0 655.9 398.0 655.8 402.0 655.8 406.0 655.8 410.0 655.8 414.0 655.8 418.0 655.8 422.0 655.7 426.0 655.7 430.0 655.7 434.0 655.6 438.0 655.6 442.0 655.5 446.0 655.5 450.0 655.4 454.0 655.3 458.0 655.3 462.0 655.2 466.0 655.0 470.0 654.9 474.0 654.7 478.0 654.6 482.0 654.4 486.0 654.1 490.0 653.8 494.0 653.5 498.0 653.2 502.0 652.9 506.0 652.5 510.0 652.2 514.0 651.9 518.0 651.6 522.0 651.4 526.0 651.2 530.0 651.1 534.0 651.0 538.0 651.0 542.0 651.0 546.0 651.0 550.0 651.0 554.0 651.0 558.0 651.0 562.0 651.1 566.0 651.2 570.0 651.3 574.0 651.5 578.0 651.8 582.0 652.1 586.0 652.4 590.0 652.8 594.0 653.1 598.0 653.5 602.0 653.8 606.0 654.0 610.0 654.3 614.0 654.5 618.0 654.7 622.0 654.9 626.0 655.0 630.0 655.1 634.0 655.2 638.0 655.3 642.0 655.4 646.0 655.5 650.0 655.5 654.0 655.6 658.0 655.6 662.0 655.7 666.0 655.7 670.0 655.7 674.0 655.8 678.0 655.8 682.0 655.8 686.0 655.8 690.0 655.8 694.0 655.8 698.0 655.9 702.0 655.9 706.0 655.9 710.0 655.9 714.0 655.9 718.0 655.9 722.0 655.9 726.0 655.9 730.0 655.9 734.0 655.9 738.0 655.9 742.0 655.9 746.0 655.9 750.0 655.9 754.0 655.9 758.0 656.0 762.0 656.0 766.0 656.0 770.0 656.0 947.0 L1110 939 L1110 202z" fill="#05d0a8"/>
<path d="M661.0 194.0 661.0 330.0 661.0 334.0 661.0 338.0 661.0 342.0 661.0 346.0 661.0 350.0 660.9 354.0 660.9 358.0 660.9 362.0 660.9 366.0 660.9 370.0 660.9 374.0 660.9 378.0 660.9 382.0 660.9 386.0 660.9 390.0 660.9 394.0 660.9 398.0 660.9 402.0 660.9 406.0 660.8 410.0 660.8 414.0 660.8 418.0 660.8 422.0 660.8 426.0 660.8 430.0 660.7 434.0 660.7 438.0 660.7 442.0 660.6 446.0 660.6 450.0 660.5 454.0 660.5 458.0 660.4 462.0 660.3 466.0 660.2 470.0 660.1 474.0 659.9 478.0 659.8 482.0 659.6 486.0 659.4 490.0 659.2 494.0 658.9 498.0 658.7 502.0 658.4 506.0 658.1 510.0 657.8 514.0 657.5 518.0 657.3 522.0 657.1 526.0 657.0 530.0 656.9 534.0 656.8 538.0 656.8 542.0 656.8 546.0 656.8 550.0 656.8 554.0 656.8 558.0 656.8 562.0 656.9 566.0 657.0 570.0 657.1 574.0 657.3 578.0 657.5 582.0 657.7 586.0 658.0 590.0 658.3 594.0 658.6 598.0 658.9 602.0 659.1 606.0 659.4 610.0 659.6 614.0 659.8 618.0 659.9 622.0 660.1 626.0 660.2 630.0 660.3 634.0 660.4 638.0 660.4 642.0 660.5 646.0 660.6 650.0 660.6 654.0 660.6 658.0 660.7 662.0 660.7 666.0 660.7 670.0 660.8 674.0 660.8 678.0 660.8 682.0 660.8 686.0 660.8 690.0 660.9 694.0 660.9 698.0 660.9 702.0 660.9 706.0 660.9 710.0 660.9 714.0 660.9 718.0 660.9 722.0 660.9 726.0 660.9 730.0 660.9 734.0 660.9 738.0 660.9 742.0 660.9 746.0 661.0 750.0 661.0 754.0 661.0 758.0 661.0 762.0 661.0 766.0 661.0 770.0 661.0 947.0 L1110 939 L1110 202z" fill="#05d090"/>
<path d="M665.6 194.0 665.6 330.0 665.6 334.0 665.6 338.0 665.6 342.0 665.6 346.0 665.6 350.0 665.6 354.0 665.6 358.0 665.6 362.0 665.5 366.0 665.5 370.0 665.5 374.0 665.5 378.0 665.5 382.0 665.5 386.0 665.5 390.0 665.5 394.0 665.5 398.0 665.5 402.0 665.5 406.0 665.5 410.0 665.5 414.0 665.5 418.0 665.4 422.0 665.4 426.0 665.4 430.0 665.4 434.0 665.4 438.0 665.3 442.0 665.3 446.0 665.3 450.0 665.2 454.0 665.2 458.0 665.1 462.0 665.0 466.0 664.9 470.0 664.9 474.0 664.7 478.0 664.6 482.0 664.5 486.0 664.3 490.0 664.1 494.0 663.9 498.0 663.7 502.0 663.5 506.0 663.2 510.0 663.0 514.0 662.8 518.0 662.6 522.0 662.5 526.0 662.4 530.0 662.3 534.0 662.2 538.0 662.2 542.0 662.2 546.0 662.2 550.0 662.2 554.0 662.2 558.0 662.2 562.0 662.3 566.0 662.3 570.0 662.4 574.0 662.6 578.0 662.7 582.0 663.0 586.0 663.2 590.0 663.4 594.0 663.6 598.0 663.9 602.0 664.1 606.0 664.3 610.0 664.4 614.0 664.6 618.0 664.7 622.0 664.8 626.0 664.9 630.0 665.0 634.0 665.1 638.0 665.1 642.0 665.2 646.0 665.2 650.0 665.3 654.0 665.3 658.0 665.3 662.0 665.4 666.0 665.4 670.0 665.4 674.0 665.4 678.0 665.4 682.0 665.5 686.0 665.5 690.0 665.5 694.0 665.5 698.0 665.5 702.0 665.5 706.0 665.5 710.0 665.5 714.0 665.5 718.0 665.5 722.0 665.5 726.0 665.5 730.0 665.5 734.0 665.6 738.0 665.6 742.0 665.6 746.0 665.6 750.0 665.6 754.0 665.6 758.0 665.6 762.0 665.6 766.0 665.6 770.0 665.6 947.0 L1110 939 L1110 202z" fill="#05d070"/>
<path d="M670.7 194.0 670.7 330.0 670.7 334.0 670.7 338.0 670.7 342.0 670.7 346.0 670.7 350.0 670.7 354.0 670.7 358.0 670.7 362.0 670.7 366.0 670.7 370.0 670.7 374.0 670.7 378.0 670.7 382.0 670.7 386.0 670.7 390.0 670.7 394.0 670.7 398.0 670.7 402.0 670.7 406.0 670.7 410.0 670.8 414.0 670.8 418.0 670.8 422.0 670.8 426.0 670.8 430.0 670.8 434.0 670.8 438.0 670.8 442.0 670.8 446.0 670.8 450.0 670.8 454.0 670.9 458.0 670.9 462.0 670.9 466.0 670.9 470.0 671.0 474.0 671.0 478.0 671.1 482.0 671.1 486.0 671.2 490.0 671.3 494.0 671.3 498.0 671.4 502.0 671.5 506.0 671.6 510.0 671.7 514.0 671.8 518.0 671.8 522.0 671.9 526.0 671.9 530.0 672.0 534.0 672.0 538.0 672.0 542.0 672.0 546.0 672.0 550.0 672.0 554.0 672.0 558.0 672.0 562.0 672.0 566.0 672.0 570.0 671.9 574.0 671.9 578.0 671.8 582.0 671.7 586.0 671.6 590.0 671.5 594.0 671.4 598.0 671.4 602.0 671.3 606.0 671.2 610.0 671.1 614.0 671.1 618.0 671.0 622.0 671.0 626.0 671.0 630.0 670.9 634.0 670.9 638.0 670.9 642.0 670.9 646.0 670.8 650.0 670.8 654.0 670.8 658.0 670.8 662.0 670.8 666.0 670.8 670.0 670.8 674.0 670.8 678.0 670.8 682.0 670.8 686.0 670.7 690.0 670.7 694.0 670.7 698.0 670.7 702.0 670.7 706.0 670.7 710.0 670.7 714.0 670.7 718.0 670.7 722.0 670.7 726.0 670.7 730.0 670.7 734.0 670.7 738.0 670.7 742.0 670.7 746.0 670.7 750.0 670.7 754.0 670.7 758.0 670.7 762.0 670.7 766.0 670.7 770.0 670.7 947.0 L1110 939 L1110 202z" fill="#05d040"/>
<path d="M676.0 194.0 676.1 330.0 676.1 334.0 676.1 338.0 676.1 342.0 676.1 346.0 676.1 350.0 676.1 354.0 676.1 358.0 676.1 362.0 676.1 366.0 676.1 370.0 676.1 374.0 676.1 378.0 676.2 382.0 676.2 386.0 676.2 390.0 676.2 394.0 676.2 398.0 676.2 402.0 676.3 406.0 676.3 410.0 676.3 414.0 676.3 418.0 676.4 422.0 676.4 426.0 676.5 430.0 676.5 434.0 676.6 438.0 676.6 442.0 676.7 446.0 676.8 450.0 676.9 454.0 677.0 458.0 677.2 462.0 677.3 466.0 677.5 470.0 677.7 474.0 678.0 478.0 678.2 482.0 678.6 486.0 678.9 490.0 679.4 494.0 679.8 498.0 680.3 502.0 680.9 506.0 681.4 510.0 681.9 514.0 682.4 518.0 682.9 522.0 683.2 526.0 683.5 530.0 683.6 534.0 683.7 538.0 683.8 542.0 683.8 546.0 683.8 550.0 683.8 554.0 683.8 558.0 683.7 562.0 683.7 566.0 683.5 570.0 683.3 574.0 683.0 578.0 682.5 582.0 682.1 586.0 681.6 590.0 681.0 594.0 680.5 598.0 680.0 602.0 679.5 606.0 679.0 610.0 678.7 614.0 678.3 618.0 678.0 622.0 677.8 626.0 677.5 630.0 677.4 634.0 677.2 638.0 677.0 642.0 676.9 646.0 676.8 650.0 676.7 654.0 676.7 658.0 676.6 662.0 676.5 666.0 676.5 670.0 676.4 674.0 676.4 678.0 676.3 682.0 676.3 686.0 676.3 690.0 676.3 694.0 676.2 698.0 676.2 702.0 676.2 706.0 676.2 710.0 676.2 714.0 676.2 718.0 676.1 722.0 676.1 726.0 676.1 730.0 676.1 734.0 676.1 738.0 676.1 742.0 676.1 746.0 676.1 750.0 676.1 754.0 676.1 758.0 676.1 762.0 676.1 766.0 676.1 770.0 676.0 947.0 L1110 939 L1110 202z" fill="#10d010"/>
<path d="M680.6 194.0 680.7 330.0 680.7 334.0 680.7 338.0 680.7 342.0 680.7 346.0 680.8 350.0 680.8 354.0 680.8 358.0 680.8 362.0 680.8 366.0 680.8 370.0 680.8 374.0 680.9 378.0 680.9 382.0 680.9 386.0 680.9 390.0 680.9 394.0 681.0 398.0 681.0 402.0 681.1 406.0 681.1 410.0 681.1 414.0 681.2 418.0 681.3 422.0 681.3 426.0 681.4 430.0 681.5 434.0 681.6 438.0 681.7 442.0 681.8 446.0 682.0 450.0 682.2 454.0 682.4 458.0 682.6 462.0 682.9 466.0 683.2 470.0 683.6 474.0 684.0 478.0 684.5 482.0 685.1 486.0 685.7 490.0 686.5 494.0 687.3 498.0 688.2 502.0 689.1 506.0 690.1 510.0 691.0 514.0 691.8 518.0 692.6 522.0 693.2 526.0 693.6 530.0 693.9 534.0 694.1 538.0 694.2 542.0 694.2 546.0 694.2 550.0 694.2 554.0 694.2 558.0 694.1 562.0 694.0 566.0 693.7 570.0 693.3 574.0 692.7 578.0 692.0 582.0 691.2 586.0 690.3 590.0 689.3 594.0 688.4 598.0 687.5 602.0 686.7 606.0 685.9 610.0 685.2 614.0 684.6 618.0 684.1 622.0 683.7 626.0 683.3 630.0 683.0 634.0 682.7 638.0 682.4 642.0 682.2 646.0 682.0 650.0 681.9 654.0 681.7 658.0 681.6 662.0 681.5 666.0 681.4 670.0 681.3 674.0 681.3 678.0 681.2 682.0 681.2 686.0 681.1 690.0 681.1 694.0 681.0 698.0 681.0 702.0 681.0 706.0 680.9 710.0 680.9 714.0 680.9 718.0 680.9 722.0 680.8 726.0 680.8 730.0 680.8 734.0 680.8 738.0 680.8 742.0 680.8 746.0 680.8 750.0 680.7 754.0 680.7 758.0 680.7 762.0 680.7 766.0 680.7 770.0 680.6 947.0 L1110 939 L1110 202z" fill="#40d005"/>
<path d="M685.0 194.0 685.1 330.0 685.1 334.0 685.1 338.0 685.1 342.0 685.2 346.0 685.2 350.0 685.2 354.0 685.2 358.0 685.2 362.0 685.2 366.0 685.2 370.0 685.3 374.0 685.3 378.0 685.3 382.0 685.3 386.0 685.3 390.0 685.4 394.0 685.4 398.0 685.4 402.0 685.5 406.0 685.5 410.0 685.6 414.0 685.6 418.0 685.7 422.0 685.8 426.0 685.9 430.0 686.0 434.0 686.1 438.0 686.2 442.0 686.3 446.0 686.5 450.0 686.7 454.0 686.9 458.0 687.2 462.0 687.4 466.0 687.8 470.0 688.2 474.0 688.7 478.0 689.2 482.0 689.8 486.0 690.5 490.0 691.3 494.0 692.2 498.0 693.1 502.0 694.1 506.0 695.2 510.0 696.1 514.0 697.0 518.0 697.8 522.0 698.5 526.0 699.0 530.0 699.3 534.0 699.5 538.0 699.6 542.0 699.6 546.0 699.6 550.0 699.6 554.0 699.6 558.0 699.5 562.0 699.3 566.0 699.0 570.0 698.6 574.0 698.0 578.0 697.3 582.0 696.4 586.0 695.4 590.0 694.4 594.0 693.4 598.0 692.4 602.0 691.5 606.0 690.7 610.0 690.0 614.0 689.3 618.0 688.8 622.0 688.3 626.0 687.9 630.0 687.5 634.0 687.2 638.0 687.0 642.0 686.7 646.0 686.5 650.0 686.4 654.0 686.2 658.0 686.1 662.0 686.0 666.0 685.9 670.0 685.8 674.0 685.7 678.0 685.7 682.0 685.6 686.0 685.5 690.0 685.5 694.0 685.5 698.0 685.4 702.0 685.4 706.0 685.4 710.0 685.3 714.0 685.3 718.0 685.3 722.0 685.3 726.0 685.2 730.0 685.2 734.0 685.2 738.0 685.2 742.0 685.2 746.0 685.2 750.0 685.2 754.0 685.2 758.0 685.1 762.0 685.1 766.0 685.1 770.0 685.0 947.0 L1110 939 L1110 202z" fill="#60d005"/>
<path d="M689.7 194.0 689.8 330.0 689.8 334.0 689.9 338.0 689.9 342.0 689.9 346.0 689.9 350.0 689.9 354.0 689.9 358.0 689.9 362.0 689.9 366.0 690.0 370.0 690.0 374.0 690.0 378.0 690.0 382.0 690.1 386.0 690.1 390.0 690.1 394.0 690.2 398.0 690.2 402.0 690.2 406.0 690.3 410.0 690.3 414.0 690.4 418.0 690.5 422.0 690.6 426.0 690.7 430.0 690.8 434.0 690.9 438.0 691.0 442.0 691.2 446.0 691.4 450.0 691.6 454.0 691.8 458.0 692.1 462.0 692.4 466.0 692.8 470.0 693.2 474.0 693.8 478.0 694.4 482.0 695.0 486.0 695.8 490.0 696.7 494.0 697.7 498.0 698.7 502.0 699.8 506.0 701.0 510.0 702.1 514.0 703.1 518.0 703.9 522.0 704.7 526.0 705.2 530.0 705.5 534.0 705.8 538.0 705.9 542.0 705.9 546.0 705.9 550.0 705.9 554.0 705.9 558.0 705.8 562.0 705.6 566.0 705.3 570.0 704.8 574.0 704.1 578.0 703.3 582.0 702.3 586.0 701.2 590.0 700.1 594.0 699.0 598.0 697.9 602.0 696.9 606.0 696.0 610.0 695.2 614.0 694.5 618.0 693.9 622.0 693.4 626.0 692.9 630.0 692.5 634.0 692.2 638.0 691.9 642.0 691.6 646.0 691.4 650.0 691.2 654.0 691.1 658.0 690.9 662.0 690.8 666.0 690.7 670.0 690.6 674.0 690.5 678.0 690.4 682.0 690.4 686.0 690.3 690.0 690.2 694.0 690.2 698.0 690.2 702.0 690.1 706.0 690.1 710.0 690.1 714.0 690.0 718.0 690.0 722.0 690.0 726.0 690.0 730.0 689.9 734.0 689.9 738.0 689.9 742.0 689.9 746.0 689.9 750.0 689.9 754.0 689.9 758.0 689.9 762.0 689.8 766.0 689.8 770.0 689.7 947.0 L1110 939 L1110 202z" fill="#80d005"/>
<path d="M694.0 194.0 694.2 330.0 694.2 334.0 694.2 338.0 694.2 342.0 694.2 346.0 694.2 350.0 694.2 354.0 694.3 358.0 694.3 362.0 694.3 366.0 694.3 370.0 694.4 374.0 694.4 378.0 694.4 382.0 694.4 386.0 694.5 390.0 694.5 394.0 694.6 398.0 694.6 402.0 694.7 406.0 694.7 410.0 694.8 414.0 694.9 418.0 695.0 422.0 695.1 426.0 695.2 430.0 695.3 434.0 695.5 438.0 695.6 442.0 695.8 446.0 696.0 450.0 696.3 454.0 696.6 458.0 696.9 462.0 697.3 466.0 697.8 470.0 698.3 474.0 698.9 478.0 699.6 482.0 700.4 486.0 701.3 490.0 702.4 494.0 703.5 498.0 704.6 502.0 705.8 506.0 707.1 510.0 708.2 514.0 709.3 518.0 710.2 522.0 710.9 526.0 711.5 530.0 711.8 534.0 712.1 538.0 712.2 542.0 712.2 546.0 712.2 550.0 712.2 554.0 712.2 558.0 712.1 562.0 711.9 566.0 711.6 570.0 711.1 574.0 710.4 578.0 709.5 582.0 708.5 586.0 707.4 590.0 706.2 594.0 704.9 598.0 703.7 602.0 702.6 606.0 701.6 610.0 700.7 614.0 699.8 618.0 699.1 622.0 698.5 626.0 697.9 630.0 697.4 634.0 697.0 638.0 696.7 642.0 696.4 646.0 696.1 650.0 695.9 654.0 695.7 658.0 695.5 662.0 695.3 666.0 695.2 670.0 695.1 674.0 695.0 678.0 694.9 682.0 694.8 686.0 694.7 690.0 694.7 694.0 694.6 698.0 694.6 702.0 694.5 706.0 694.5 710.0 694.5 714.0 694.4 718.0 694.4 722.0 694.4 726.0 694.3 730.0 694.3 734.0 694.3 738.0 694.3 742.0 694.3 746.0 694.2 750.0 694.2 754.0 694.2 758.0 694.2 762.0 694.2 766.0 694.2 770.0 694.0 947.0 L1110 939 L1110 202z" fill="#98d005"/>
<path d="M698.1 194.0 698.3 330.0 698.3 334.0 698.3 338.0 698.4 342.0 698.4 346.0 698.4 350.0 698.4 354.0 698.5 358.0 698.5 362.0 698.5 366.0 698.6 370.0 698.6 374.0 698.6 378.0 698.7 382.0 698.8 386.0 698.8 390.0 698.9 394.0 699.0 398.0 699.0 402.0 699.1 406.0 699.2 410.0 699.4 414.0 699.5 418.0 699.7 422.0 699.8 426.0 700.0 430.0 700.2 434.0 700.5 438.0 700.8 442.0 701.1 446.0 701.5 450.0 701.9 454.0 702.4 458.0 702.9 462.0 703.6 466.0 704.3 470.0 705.2 474.0 706.2 478.0 707.3 482.0 708.6 486.0 710.0 490.0 711.6 494.0 713.3 498.0 715.1 502.0 716.9 506.0 718.7 510.0 720.4 514.0 721.9 518.0 723.2 522.0 724.2 526.0 725.0 530.0 725.5 534.0 725.8 538.0 725.9 542.0 726.0 546.0 726.0 550.0 726.0 554.0 726.0 558.0 725.8 562.0 725.6 566.0 725.1 570.0 724.4 574.0 723.5 578.0 722.3 582.0 720.8 586.0 719.1 590.0 717.3 594.0 715.5 598.0 713.7 602.0 712.0 606.0 710.4 610.0 708.9 614.0 707.6 618.0 706.5 622.0 705.4 626.0 704.6 630.0 703.8 634.0 703.1 638.0 702.5 642.0 702.0 646.0 701.6 650.0 701.2 654.0 700.8 658.0 700.5 662.0 700.3 666.0 700.1 670.0 699.9 674.0 699.7 678.0 699.5 682.0 699.4 686.0 699.3 690.0 699.2 694.0 699.1 698.0 699.0 702.0 698.9 706.0 698.8 710.0 698.8 714.0 698.7 718.0 698.7 722.0 698.6 726.0 698.6 730.0 698.5 734.0 698.5 738.0 698.5 742.0 698.4 746.0 698.4 750.0 698.4 754.0 698.4 758.0 698.3 762.0 698.3 766.0 698.3 770.0 698.0 947.0 L1110 939 L1110 202z" fill="#b0d005"/>
<path d="M703.1 194.0 703.3 330.0 703.3 334.0 703.3 338.0 703.3 342.0 703.3 346.0 703.3 350.0 703.4 354.0 703.4 358.0 703.4 362.0 703.5 366.0 703.5 370.0 703.5 374.0 703.6 378.0 703.6 382.0 703.7 386.0 703.7 390.0 703.8 394.0 703.8 398.0 703.9 402.0 704.0 406.0 704.1 410.0 704.2 414.0 704.3 418.0 704.4 422.0 704.6 426.0 704.8 430.0 705.0 434.0 705.2 438.0 705.4 442.0 705.7 446.0 706.0 450.0 706.4 454.0 706.9 458.0 707.4 462.0 708.0 466.0 708.7 470.0 709.5 474.0 710.4 478.0 711.4 482.0 712.6 486.0 714.0 490.0 715.5 494.0 717.2 498.0 719.0 502.0 720.9 506.0 722.7 510.0 724.5 514.0 726.2 518.0 727.6 522.0 728.7 526.0 729.6 530.0 730.1 534.0 730.5 538.0 730.6 542.0 730.7 546.0 730.7 550.0 730.7 554.0 730.7 558.0 730.5 562.0 730.2 566.0 729.7 570.0 729.0 574.0 727.9 578.0 726.6 582.0 725.0 586.0 723.2 590.0 721.3 594.0 719.5 598.0 717.6 602.0 715.9 606.0 714.4 610.0 713.0 614.0 711.7 618.0 710.6 622.0 709.7 626.0 708.9 630.0 708.1 634.0 707.5 638.0 707.0 642.0 706.5 646.0 706.1 650.0 705.8 654.0 705.5 658.0 705.2 662.0 705.0 666.0 704.8 670.0 704.6 674.0 704.5 678.0 704.3 682.0 704.2 686.0 704.1 690.0 704.0 694.0 703.9 698.0 703.9 702.0 703.8 706.0 703.7 710.0 703.7 714.0 703.6 718.0 703.6 722.0 703.5 726.0 703.5 730.0 703.5 734.0 703.4 738.0 703.4 742.0 703.4 746.0 703.4 750.0 703.3 754.0 703.3 758.0 703.3 762.0 703.3 766.0 703.3 770.0 703.0 947.0 L1110 939 L1110 202z" fill="#ccd005"/>
<path d="M708.1 194.0 708.3 330.0 708.3 334.0 708.3 338.0 708.3 342.0 708.3 346.0 708.3 350.0 708.4 354.0 708.4 358.0 708.4 362.0 708.5 366.0 708.5 370.0 708.5 374.0 708.6 378.0 708.6 382.0 708.7 386.0 708.7 390.0 708.8 394.0 708.8 398.0 708.9 402.0 709.0 406.0 709.1 410.0 709.2 414.0 709.3 418.0 709.4 422.0 709.6 426.0 709.8 430.0 710.0 434.0 710.2 438.0 710.4 442.0 710.7 446.0 711.1 450.0 711.5 454.0 711.9 458.0 712.5 462.0 713.1 466.0 713.8 470.0 714.6 474.0 715.6 478.0 716.8 482.0 718.1 486.0 719.6 490.0 721.3 494.0 723.2 498.0 725.2 502.0 727.4 506.0 729.7 510.0 731.9 514.0 733.9 518.0 735.7 522.0 737.1 526.0 738.2 530.0 739.0 534.0 739.4 538.0 739.6 542.0 739.7 546.0 739.7 550.0 739.7 554.0 739.6 558.0 739.5 562.0 739.1 566.0 738.4 570.0 737.4 574.0 736.1 578.0 734.4 582.0 732.4 586.0 730.2 590.0 728.0 594.0 725.8 598.0 723.7 602.0 721.7 606.0 720.0 610.0 718.4 614.0 717.1 618.0 715.9 622.0 714.9 626.0 714.0 630.0 713.3 634.0 712.6 638.0 712.1 642.0 711.6 646.0 711.2 650.0 710.8 654.0 710.5 658.0 710.3 662.0 710.0 666.0 709.8 670.0 709.6 674.0 709.5 678.0 709.3 682.0 709.2 686.0 709.1 690.0 709.0 694.0 708.9 698.0 708.9 702.0 708.8 706.0 708.7 710.0 708.7 714.0 708.6 718.0 708.6 722.0 708.5 726.0 708.5 730.0 708.5 734.0 708.4 738.0 708.4 742.0 708.4 746.0 708.4 750.0 708.3 754.0 708.3 758.0 708.3 762.0 708.3 766.0 708.3 770.0 708.0 947.0 L1110 939 L1110 202z" fill="#d8c005"/>
<path d="M713.1 194.0 713.3 330.0 713.3 334.0 713.3 338.0 713.3 342.0 713.4 346.0 713.4 350.0 713.4 354.0 713.4 358.0 713.5 362.0 713.5 366.0 713.5 370.0 713.6 374.0 713.6 378.0 713.7 382.0 713.7 386.0 713.8 390.0 713.8 394.0 713.9 398.0 714.0 402.0 714.1 406.0 714.2 410.0 714.3 414.0 714.4 418.0 714.6 422.0 714.8 426.0 715.0 430.0 715.2 434.0 715.4 438.0 715.7 442.0 716.0 446.0 716.4 450.0 716.9 454.0 717.4 458.0 718.0 462.0 718.7 466.0 719.5 470.0 720.5 474.0 721.6 478.0 722.9 482.0 724.5 486.0 726.3 490.0 728.4 494.0 730.7 498.0 733.3 502.0 736.2 506.0 739.1 510.0 742.0 514.0 744.8 518.0 747.3 522.0 749.3 526.0 750.9 530.0 751.9 534.0 752.6 538.0 752.9 542.0 753.0 546.0 753.0 550.0 753.0 554.0 752.9 558.0 752.7 562.0 752.1 566.0 751.2 570.0 749.7 574.0 747.8 578.0 745.4 582.0 742.7 586.0 739.8 590.0 736.9 594.0 734.0 598.0 731.4 602.0 728.9 606.0 726.8 610.0 724.9 614.0 723.3 618.0 721.9 622.0 720.7 626.0 719.7 630.0 718.9 634.0 718.1 638.0 717.5 642.0 717.0 646.0 716.5 650.0 716.1 654.0 715.8 658.0 715.5 662.0 715.2 666.0 715.0 670.0 714.8 674.0 714.6 678.0 714.5 682.0 714.3 686.0 714.2 690.0 714.1 694.0 714.0 698.0 713.9 702.0 713.9 706.0 713.8 710.0 713.7 714.0 713.7 718.0 713.6 722.0 713.6 726.0 713.5 730.0 713.5 734.0 713.5 738.0 713.4 742.0 713.4 746.0 713.4 750.0 713.4 754.0 713.3 758.0 713.3 762.0 713.3 766.0 713.3 770.0 713.0 947.0 L1110 939 L1110 202z" fill="#d8a808"/>
<path d="M717.1 194.0 717.3 330.0 717.3 334.0 717.4 338.0 717.4 342.0 717.4 346.0 717.4 350.0 717.5 354.0 717.5 358.0 717.5 362.0 717.6 366.0 717.6 370.0 717.7 374.0 717.7 378.0 717.8 382.0 717.8 386.0 717.9 390.0 718.0 394.0 718.0 398.0 718.1 402.0 718.2 406.0 718.4 410.0 718.5 414.0 718.6 418.0 718.8 422.0 719.0 426.0 719.2 430.0 719.5 434.0 719.7 438.0 720.1 442.0 720.4 446.0 720.9 450.0 721.4 454.0 722.0 458.0 722.7 462.0 723.4 466.0 724.4 470.0 725.5 474.0 726.8 478.0 728.3 482.0 730.1 486.0 732.1 490.0 734.5 494.0 737.1 498.0 740.1 502.0 743.3 506.0 746.6 510.0 749.9 514.0 753.1 518.0 755.9 522.0 758.2 526.0 760.0 530.0 761.2 534.0 761.9 538.0 762.3 542.0 762.4 546.0 762.4 550.0 762.4 554.0 762.3 558.0 762.0 562.0 761.4 566.0 760.3 570.0 758.7 574.0 756.5 578.0 753.8 582.0 750.7 586.0 747.4 590.0 744.1 594.0 740.9 598.0 737.8 602.0 735.1 606.0 732.7 610.0 730.5 614.0 728.7 618.0 727.1 622.0 725.8 626.0 724.6 630.0 723.7 634.0 722.8 638.0 722.1 642.0 721.5 646.0 721.0 650.0 720.5 654.0 720.2 658.0 719.8 662.0 719.5 666.0 719.3 670.0 719.1 674.0 718.9 678.0 718.7 682.0 718.5 686.0 718.4 690.0 718.3 694.0 718.2 698.0 718.1 702.0 718.0 706.0 717.9 710.0 717.8 714.0 717.8 718.0 717.7 722.0 717.7 726.0 717.6 730.0 717.6 734.0 717.5 738.0 717.5 742.0 717.5 746.0 717.4 750.0 717.4 754.0 717.4 758.0 717.4 762.0 717.3 766.0 717.3 770.0 717.0 947.0 L1110 939 L1110 202z" fill="#d08808"/>
<path d="M722.1 194.0 722.4 330.0 722.4 334.0 722.4 338.0 722.4 342.0 722.5 346.0 722.5 350.0 722.5 354.0 722.6 358.0 722.6 362.0 722.7 366.0 722.7 370.0 722.8 374.0 722.8 378.0 722.9 382.0 723.0 386.0 723.0 390.0 723.1 394.0 723.2 398.0 723.3 402.0 723.5 406.0 723.6 410.0 723.8 414.0 723.9 418.0 724.1 422.0 724.4 426.0 724.6 430.0 724.9 434.0 725.2 438.0 725.6 442.0 726.1 446.0 726.6 450.0 727.2 454.0 727.8 458.0 728.6 462.0 729.6 466.0 730.7 470.0 732.0 474.0 733.5 478.0 735.3 482.0 737.4 486.0 739.8 490.0 742.5 494.0 745.7 498.0 749.2 502.0 752.9 506.0 756.8 510.0 760.7 514.0 764.4 518.0 767.7 522.0 770.5 526.0 772.5 530.0 774.0 534.0 774.8 538.0 775.2 542.0 775.4 546.0 775.4 550.0 775.4 554.0 775.3 558.0 775.0 562.0 774.2 566.0 773.0 570.0 771.1 574.0 768.5 578.0 765.3 582.0 761.7 586.0 757.8 590.0 753.9 594.0 750.1 598.0 746.5 602.0 743.3 606.0 740.4 610.0 737.9 614.0 735.8 618.0 733.9 622.0 732.3 626.0 731.0 630.0 729.8 634.0 728.9 638.0 728.0 642.0 727.3 646.0 726.7 650.0 726.2 654.0 725.7 658.0 725.3 662.0 725.0 666.0 724.7 670.0 724.4 674.0 724.2 678.0 724.0 682.0 723.8 686.0 723.6 690.0 723.5 694.0 723.4 698.0 723.3 702.0 723.2 706.0 723.1 710.0 723.0 714.0 722.9 718.0 722.8 722.0 722.8 726.0 722.7 730.0 722.7 734.0 722.6 738.0 722.6 742.0 722.5 746.0 722.5 750.0 722.5 754.0 722.5 758.0 722.4 762.0 722.4 766.0 722.4 770.0 722.1 947.0 L1110 939 L1110 202z" fill="#d06808"/>
<path d="M735.1 194.0 735.4 330.0 735.4 334.0 735.4 338.0 735.5 342.0 735.5 346.0 735.5 350.0 735.6 354.0 735.6 358.0 735.6 362.0 735.7 366.0 735.7 370.0 735.8 374.0 735.9 378.0 735.9 382.0 736.0 386.0 736.1 390.0 736.2 394.0 736.3 398.0 736.4 402.0 736.5 406.0 736.7 410.0 736.8 414.0 737.0 418.0 737.2 422.0 737.5 426.0 737.7 430.0 738.0 434.0 738.4 438.0 738.8 442.0 739.3 446.0 739.8 450.0 740.4 454.0 741.1 458.0 742.0 462.0 743.0 466.0 744.1 470.0 745.5 474.0 747.1 478.0 748.9 482.0 751.1 486.0 753.6 490.0 756.5 494.0 759.8 498.0 763.5 502.0 767.4 506.0 771.5 510.0 775.6 514.0 779.5 518.0 783.0 522.0 785.8 526.0 788.0 530.0 789.5 534.0 790.4 538.0 790.8 542.0 791.0 546.0 791.0 550.0 791.0 554.0 790.9 558.0 790.5 562.0 789.8 566.0 788.4 570.0 786.4 574.0 783.8 578.0 780.4 582.0 776.6 586.0 772.6 590.0 768.4 594.0 764.4 598.0 760.7 602.0 757.3 606.0 754.3 610.0 751.7 614.0 749.4 618.0 747.5 622.0 745.8 626.0 744.4 630.0 743.2 634.0 742.2 638.0 741.3 642.0 740.6 646.0 739.9 650.0 739.4 654.0 738.9 658.0 738.5 662.0 738.1 666.0 737.8 670.0 737.5 674.0 737.3 678.0 737.1 682.0 736.9 686.0 736.7 690.0 736.6 694.0 736.4 698.0 736.3 702.0 736.2 706.0 736.1 710.0 736.0 714.0 736.0 718.0 735.9 722.0 735.8 726.0 735.8 730.0 735.7 734.0 735.7 738.0 735.6 742.0 735.6 746.0 735.5 750.0 735.5 754.0 735.5 758.0 735.4 762.0 735.4 766.0 735.4 770.0 735.1 947.0 L1110 939 L1110 202z" fill="#cc5008"/>
<path d="M759.1 194.0 759.4 330.0 759.4 334.0 759.4 338.0 759.5 342.0 759.5 346.0 759.5 350.0 759.6 354.0 759.6 358.0 759.6 362.0 759.7 366.0 759.7 370.0 759.8 374.0 759.8 378.0 759.9 382.0 760.0 386.0 760.1 390.0 760.2 394.0 760.3 398.0 760.4 402.0 760.5 406.0 760.6 410.0 760.8 414.0 761.0 418.0 761.2 422.0 761.4 426.0 761.7 430.0 762.0 434.0 762.3 438.0 762.7 442.0 763.2 446.0 763.7 450.0 764.3 454.0 765.0 458.0 765.8 462.0 766.8 466.0 767.9 470.0 769.2 474.0 770.8 478.0 772.6 482.0 774.8 486.0 777.2 490.0 780.1 494.0 783.3 498.0 786.9 502.0 790.7 506.0 794.7 510.0 798.8 514.0 802.6 518.0 805.9 522.0 808.7 526.0 810.9 530.0 812.3 534.0 813.2 538.0 813.6 542.0 813.8 546.0 813.8 550.0 813.8 554.0 813.7 558.0 813.3 562.0 812.6 566.0 811.3 570.0 809.3 574.0 806.7 578.0 803.5 582.0 799.7 586.0 795.8 590.0 791.7 594.0 787.8 598.0 784.2 602.0 780.8 606.0 777.9 610.0 775.3 614.0 773.1 618.0 771.2 622.0 769.6 626.0 768.2 630.0 767.1 634.0 766.0 638.0 765.2 642.0 764.5 646.0 763.8 650.0 763.3 654.0 762.8 658.0 762.4 662.0 762.1 666.0 761.7 670.0 761.5 674.0 761.2 678.0 761.0 682.0 760.8 686.0 760.7 690.0 760.5 694.0 760.4 698.0 760.3 702.0 760.2 706.0 760.1 710.0 760.0 714.0 759.9 718.0 759.9 722.0 759.8 726.0 759.7 730.0 759.7 734.0 759.6 738.0 759.6 742.0 759.6 746.0 759.5 750.0 759.5 754.0 759.5 758.0 759.4 762.0 759.4 766.0 759.4 770.0 759.1 947.0 L1110 939 L1110 202z" fill="#cc3808"/>
<path d="M787.9 194.0 788.1 330.0 788.1 334.0 788.2 338.0 788.2 342.0 788.2 346.0 788.2 350.0 788.3 354.0 788.3 358.0 788.3 362.0 788.4 366.0 788.4 370.0 788.5 374.0 788.5 378.0 788.6 382.0 788.7 386.0 788.7 390.0 788.8 394.0 788.9 398.0 789.0 402.0 789.1 406.0 789.2 410.0 789.4 414.0 789.5 418.0 789.7 422.0 789.9 426.0 790.1 430.0 790.4 434.0 790.7 438.0 791.0 442.0 791.4 446.0 791.8 450.0 792.4 454.0 793.0 458.0 793.7 462.0 794.5 466.0 795.5 470.0 796.6 474.0 798.0 478.0 799.5 482.0 801.4 486.0 803.5 490.0 806.0 494.0 808.7 498.0 811.8 502.0 815.1 506.0 818.6 510.0 822.0 514.0 825.3 518.0 828.2 522.0 830.6 526.0 832.5 530.0 833.7 534.0 834.5 538.0 834.9 542.0 835.0 546.0 835.0 550.0 835.0 554.0 834.9 558.0 834.6 562.0 834.0 566.0 832.8 570.0 831.2 574.0 828.9 578.0 826.1 582.0 822.9 586.0 819.5 590.0 816.0 594.0 812.6 598.0 809.5 602.0 806.6 606.0 804.1 610.0 801.9 614.0 800.0 618.0 798.3 622.0 796.9 626.0 795.7 630.0 794.7 634.0 793.9 638.0 793.1 642.0 792.5 646.0 792.0 650.0 791.5 654.0 791.1 658.0 790.7 662.0 790.4 666.0 790.2 670.0 789.9 674.0 789.7 678.0 789.5 682.0 789.4 686.0 789.2 690.0 789.1 694.0 789.0 698.0 788.9 702.0 788.8 706.0 788.7 710.0 788.7 714.0 788.6 718.0 788.5 722.0 788.5 726.0 788.4 730.0 788.4 734.0 788.4 738.0 788.3 742.0 788.3 746.0 788.3 750.0 788.2 754.0 788.2 758.0 788.2 762.0 788.2 766.0 788.1 770.0 787.8 947.0 L1110 939 L1110 202z" fill="#cc2008"/>
<path d="M830.0 194.0 830.2 330.0 830.2 334.0 830.2 338.0 830.2 342.0 830.3 346.0 830.3 350.0 830.3 354.0 830.3 358.0 830.4 362.0 830.4 366.0 830.5 370.0 830.5 374.0 830.5 378.0 830.6 382.0 830.6 386.0 830.7 390.0 830.8 394.0 830.9 398.0 830.9 402.0 831.0 406.0 831.1 410.0 831.3 414.0 831.4 418.0 831.6 422.0 831.7 426.0 831.9 430.0 832.2 434.0 832.4 438.0 832.7 442.0 833.1 446.0 833.4 450.0 833.9 454.0 834.4 458.0 835.1 462.0 835.8 466.0 836.7 470.0 837.7 474.0 838.8 478.0 840.2 482.0 841.8 486.0 843.7 490.0 845.9 494.0 848.3 498.0 851.0 502.0 853.9 506.0 857.0 510.0 860.0 514.0 862.9 518.0 865.5 522.0 867.6 526.0 869.2 530.0 870.3 534.0 870.9 538.0 871.3 542.0 871.4 546.0 871.4 550.0 871.4 554.0 871.3 558.0 871.1 562.0 870.5 566.0 869.5 570.0 868.0 574.0 866.0 578.0 863.6 582.0 860.7 586.0 857.7 590.0 854.7 594.0 851.7 598.0 849.0 602.0 846.4 606.0 844.2 610.0 842.3 614.0 840.6 618.0 839.2 622.0 837.9 626.0 836.9 630.0 836.0 634.0 835.2 638.0 834.6 642.0 834.0 646.0 833.6 650.0 833.1 654.0 832.8 658.0 832.5 662.0 832.2 666.0 832.0 670.0 831.8 674.0 831.6 678.0 831.4 682.0 831.3 686.0 831.2 690.0 831.1 694.0 831.0 698.0 830.9 702.0 830.8 706.0 830.7 710.0 830.7 714.0 830.6 718.0 830.6 722.0 830.5 726.0 830.5 730.0 830.4 734.0 830.4 738.0 830.4 742.0 830.3 746.0 830.3 750.0 830.3 754.0 830.3 758.0 830.2 762.0 830.2 766.0 830.2 770.0 829.9 947.0 L1110 939 L1110 202z" fill="#c80505"/>
</g>
<path d="M698.1 194.0 698.3 330.0 698.3 334.0 698.3 338.0 698.4 342.0 698.4 346.0 698.4 350.0 698.4 354.0 698.5 358.0 698.5 362.0 698.5 366.0 698.6 370.0 698.6 374.0 698.6 378.0 698.7 382.0 698.8 386.0 698.8 390.0 698.9 394.0 699.0 398.0 699.0 402.0 699.1 406.0 699.2 410.0 699.4 414.0 699.5 418.0 699.7 422.0 699.8 426.0 700.0 430.0 700.2 434.0 700.5 438.0 700.8 442.0 701.1 446.0 701.5 450.0 701.9 454.0 702.4 458.0 702.9 462.0 703.6 466.0 704.3 470.0 705.2 474.0 706.2 478.0 707.3 482.0 708.6 486.0 710.0 490.0 711.6 494.0 713.3 498.0 715.1 502.0 716.9 506.0 718.7 510.0 720.4 514.0 721.9 518.0 723.2 522.0 724.2 526.0 725.0 530.0 725.5 534.0 725.8 538.0 725.9 542.0 726.0 546.0 726.0 550.0 726.0 554.0 726.0 558.0 725.8 562.0 725.6 566.0 725.1 570.0 724.4 574.0 723.5 578.0 722.3 582.0 720.8 586.0 719.1 590.0 717.3 594.0 715.5 598.0 713.7 602.0 712.0 606.0 710.4 610.0 708.9 614.0 707.6 618.0 706.5 622.0 705.4 626.0 704.6 630.0 703.8 634.0 703.1 638.0 702.5 642.0 702.0 646.0 701.6 650.0 701.2 654.0 700.8 658.0 700.5 662.0 700.3 666.0 700.1 670.0 699.9 674.0 699.7 678.0 699.5 682.0 699.4 686.0 699.3 690.0 699.2 694.0 699.1 698.0 699.0 702.0 698.9 706.0 698.8 710.0 698.8 714.0 698.7 718.0 698.7 722.0 698.6 726.0 698.6 730.0 698.5 734.0 698.5 738.0 698.5 742.0 698.4 746.0 698.4 750.0 698.4 754.0 698.4 758.0 698.3 762.0 698.3 766.0 698.3 770.0 698.0 947.0" fill="none" stroke="#005a00" stroke-width="2"/>
<path d="M713.1 194.0 713.3 330.0 713.3 334.0 713.3 338.0 713.3 342.0 713.4 346.0 713.4 350.0 713.4 354.0 713.4 358.0 713.5 362.0 713.5 366.0 713.5 370.0 713.6 374.0 713.6 378.0 713.7 382.0 713.7 386.0 713.8 390.0 713.8 394.0 713.9 398.0 714.0 402.0 714.1 406.0 714.2 410.0 714.3 414.0 714.4 418.0 714.6 422.0 714.8 426.0 715.0 430.0 715.2 434.0 715.4 438.0 715.7 442.0 716.0 446.0 716.4 450.0 716.9 454.0 717.4 458.0 718.0 462.0 718.7 466.0 719.5 470.0 720.5 474.0 721.6 478.0 722.9 482.0 724.5 486.0 726.3 490.0 728.4 494.0 730.7 498.0 733.3 502.0 736.2 506.0 739.1 510.0 742.0 514.0 744.8 518.0 747.3 522.0 749.3 526.0 750.9 530.0 751.9 534.0 752.6 538.0 752.9 542.0 753.0 546.0 753.0 550.0 753.0 554.0 752.9 558.0 752.7 562.0 752.1 566.0 751.2 570.0 749.7 574.0 747.8 578.0 745.4 582.0 742.7 586.0 739.8 590.0 736.9 594.0 734.0 598.0 731.4 602.0 728.9 606.0 726.8 610.0 724.9 614.0 723.3 618.0 721.9 622.0 720.7 626.0 719.7 630.0 718.9 634.0 718.1 638.0 717.5 642.0 717.0 646.0 716.5 650.0 716.1 654.0 715.8 658.0 715.5 662.0 715.2 666.0 715.0 670.0 714.8 674.0 714.6 678.0 714.5 682.0 714.3 686.0 714.2 690.0 714.1 694.0 714.0 698.0 713.9 702.0 713.9 706.0 713.8 710.0 713.7 714.0 713.7 718.0 713.6 722.0 713.6 726.0 713.5 730.0 713.5 734.0 713.5 738.0 713.4 742.0 713.4 746.0 713.4 750.0 713.4 754.0 713.3 758.0 713.3 762.0 713.3 766.0 713.3 770.0 713.0 947.0" fill="none" stroke="#000" stroke-width="2.2"/>
</g>
<path d="M731 606l37 33" stroke="#000" stroke-width="1"/><path d="M730.500 605.500l7.500 3.200-3.600 4z" fill="#000"/>
<text x="768" y="644" font-family="Liberation Sans,sans-serif" font-size="12" fill="#000">17,41°C</text>
<g fill="#000" stroke="none"><rect x="375.500" y="921.500" width="8.500" height="8.500" rx="2"/><path d="M378.800 926v-22h2v22zM380 887.500l4.200 16.500h-8.400zM380 925h22v2h-22zM418 926l-16.500 4.200v-8.400z"/></g>
<g font-family="Liberation Sans,sans-serif" font-size="12.500" fill="#000"><text x="382.500" y="885.800">Y</text><text x="383" y="923">Z</text><text x="419.500" y="923">X</text></g>
</svg>
<div class="lg" style="top:273px">20</div><div class="lg" style="top:297px">19,3</div><div class="lg" style="top:321px">18,6</div><div class="lg" style="top:345px">17,9</div><div class="lg" style="top:369px">17,2</div><div class="lg" style="top:393px">16,5</div><div class="lg" style="top:417px">15,8</div><div class="lg" style="top:441px">15,1</div><div class="lg" style="top:465px">14,4</div><div class="lg" style="top:489px">13,7</div><div class="lg" style="top:513px">13</div><div class="lg" style="top:537px">12,3</div><div class="lg" style="top:561px">11,6</div><div class="lg" style="top:585px">10,9</div><div class="lg" style="top:609px">10,2</div><div class="lg" style="top:633px">9,5</div><div class="lg" style="top:657px">8,8</div><div class="lg" style="top:681px">8,1</div>
<!-- results panel -->
<div id="rp"></div><div id="rph"></div><div id="rpw"></div>
<div class="t t12" style="left:1276px;top:217px;font-weight:bold;color:#1e2f55;letter-spacing:-.2px">Risultati calcolo</div>
<svg style="left:1717px;top:219px" width="6" height="9" viewBox="0 0 6 9"><path d="M.3 .2l5.400 4.300-5.400 4.300z" fill="#111"/></svg>
<div class="abs" style="left:1288px;top:265px;width:432px;height:16px;background:#eef6fe"></div>
<div class="t cc" style="left:1504px;top:267px;font-size:13px;font-weight:bold;letter-spacing:0;color:#1f3864">Risultati di calcolo</div>
<svg style="left:1414px;top:288px" width="16" height="14" viewBox="0 0 16 14">
 <rect x=".5" y="8.500" width="2.600" height="5" rx=".6" fill="#f4b04a" stroke="#c8862a" stroke-width=".6"/>
 <rect x="4.300" y="5.500" width="2.600" height="8" rx=".6" fill="#7cc86a" stroke="#4a9a3a" stroke-width=".6"/>
 <rect x="8.100" y=".8" width="2.600" height="12.700" rx=".6" fill="#7ab0e8" stroke="#3a78c0" stroke-width=".6"/>
 <rect x="11.900" y="3.500" width="2.600" height="10" rx=".6" fill="#f06a5a" stroke="#c03a2a" stroke-width=".6"/>
</svg>
<div class="t" style="left:1433px;top:289px;font-size:13px;font-weight:bold;letter-spacing:-.4px;color:#000">CALCOLO TRASMITTANZA</div>
<svg style="left:1402px;top:601px" width="9" height="15" viewBox="0 0 9 15"><rect x=".5" y=".5" width="8" height="14" rx="1" fill="#e4ecf6" stroke="#7a8aa0"/><rect x="3" y="2.500" width="3" height="2.500" fill="#e03a2a"/><rect x="3" y="6.200" width="3" height="2.500" fill="#3a7ad0"/><rect x="3" y="9.900" width="3" height="2.500" fill="#3a7ad0"/></svg>
<div class="t" style="left:1419px;top:602px;font-size:13px;font-weight:bold;letter-spacing:-.42px;color:#000">VERIFICA FORMAZIONE MUFFA</div>
<div class="th" style="left:1288px;top:309px;width:173px">Parametro</div><div class="th" style="left:1465px;top:309px;width:69px">Simbolo</div><div class="th" style="left:1538px;top:309px;width:93px">Valore</div><div class="th" style="left:1635px;top:309px;width:85px">U.M.</div>
<div class="c" style="left:1291px;top:331px">Flusso termico</div><div class="c cc" style="left:1504px;top:331px">Φ</div><div class="c cr" style="left:1639px;top:331px">30,757</div><div class="c cc" style="left:1681px;top:331px">W/m</div>
<div class="c" style="left:1291px;top:356px">Trasmittanza termica lineica esterna</div><div class="c cc" style="left:1504px;top:356px">Ψe</div><div class="c cr" style="left:1639px;top:356px">0,336</div><div class="c cc" style="left:1681px;top:356px">W/mK</div>
<div class="c" style="left:1291px;top:381px">Trasmittanza termica lineica interna</div><div class="c cc" style="left:1504px;top:381px">Ψi</div><div class="c cr" style="left:1639px;top:381px">0,625</div><div class="c cc" style="left:1681px;top:381px">W/mK</div>
<div class="c" style="left:1291px;top:406px">Coefficiente di accoppiamento</div><div class="c cc" style="left:1504px;top:406px">L2D</div><div class="c cr" style="left:1639px;top:406px">2,585</div><div class="c cc" style="left:1681px;top:406px">W/mK</div>
<div class="c" style="left:1291px;top:431px">Temperatura minima</div><div class="c cc" style="left:1504px;top:431px">Tmin</div><div class="c cr" style="left:1639px;top:431px">17,410</div><div class="c cc" style="left:1681px;top:431px">°C</div>
<div class="c" style="left:1291px;top:456px">Numero di elementi mesh</div><div class="c cc" style="left:1504px;top:456px">n</div><div class="c cr" style="left:1639px;top:456px">4764</div>
<div class="th" style="left:1288px;top:623px;width:173px">Parametro</div><div class="th" style="left:1465px;top:623px;width:69px">Simbolo</div><div class="th" style="left:1538px;top:623px;width:93px">Valore</div><div class="th" style="left:1635px;top:623px;width:85px">U.M.</div>
<div class="c" style="left:1291px;top:645px">Mese critico</div><div class="c cr" style="left:1639px;top:645px">Gennaio</div>
<div class="c" style="left:1291px;top:670px">Temperatura formazione muffa</div><div class="c cc" style="left:1504px;top:670px">Tsi min</div><div class="c cr" style="left:1639px;top:670px">16,231</div><div class="c cc" style="left:1681px;top:670px">°C</div>
<div class="c" style="left:1291px;top:695px">Fattore di temperatura critico</div><div class="c cc" style="left:1504px;top:695px">f Rsi,max</div><div class="c cr" style="left:1639px;top:695px">0,683</div>
<div class="c" style="left:1291px;top:720px">Trasmittanza per evitare muffa</div><div class="c cc" style="left:1504px;top:720px">Ucrit</div><div class="c cr" style="left:1639px;top:720px">1,267</div><div class="c cc" style="left:1681px;top:720px">W/m²K</div>
<div class="c" style="left:1291px;top:745px">Resistenza per evitare muffa</div><div class="c cc" style="left:1504px;top:745px">Rcrit</div><div class="c cr" style="left:1639px;top:745px">0,789</div><div class="c cc" style="left:1681px;top:745px">m²K/W</div>
<div class="c" style="left:1291px;top:770px">Fattore di temperatura</div><div class="c cc" style="left:1504px;top:770px">f Rsi</div><div class="c cr" style="left:1639px;top:770px">0,782</div>
<div class="c" style="left:1291px;top:795px">Verifica (f Rsi &gt; f Rsi,max)</div><div class="c cr" style="left:1639px;top:795px;color:#1f8a1f;letter-spacing:-.5px">MUFFA ASSENTE</div>
<div class="abs" style="left:1564px;top:912px;width:156px;height:22px;border:1px solid #9fb6d6;border-radius:2px;background:linear-gradient(#dfeaf8,#cfdef2 50%,#c4d6ee)"></div>
<svg style="left:1568px;top:915px" width="17" height="15" viewBox="0 0 17 15"><rect x=".5" y=".5" width="16" height="14" fill="#fff" stroke="#5a8ac8"/><rect x="1" y="1" width="15" height="3.500" fill="#4a8ad8"/><path d="M1 7.500h15M1 11h15M6 4.500v10M11 4.500v10" stroke="#8ab0e0" stroke-width="1"/></svg>
<div class="t" style="left:1593px;top:916px;color:#1e2f55;letter-spacing:-.27px">Visualizza risultati mensili</div>
<!-- side tabs -->
<div class="abs" style="left:1740px;top:201px;width:1px;height:772px;background:#8593a8"></div>
<div class="abs" style="left:1741px;top:201px;width:26px;height:772px;background:#cfdcee"></div>
<div class="abs" style="left:1741px;top:284px;width:26px;height:115px;background:linear-gradient(#f7a83a,#f59b1e 20px);border-top:1px solid #e08a10;border-bottom:1px solid #e08a10"></div>
<svg style="left:1741px;top:335.500px" width="5" height="12" viewBox="0 0 5 12"><path d="M0 0l5 6-5 6z" fill="#d0dff0"/></svg>
<svg style="left:1746px;top:214px" width="16" height="14" viewBox="0 0 16 14"><circle cx="4" cy="4.500" r="3.200" fill="#5aa4d8" stroke="#1a7cbc" stroke-width="1.400"/><path d="M6.500 2.500h7.500q1.500 2 0 4h-7.500" fill="#dceaf8" stroke="#1a7cbc" stroke-width="1.300"/><path d="M4.500 10.500l3-2.500v5zM11.500 10.500l-3-2.500v5z" fill="#1a7cbc"/></svg>
<div class="t t12" style="left:1754px;top:229px;transform-origin:0 0;transform:rotate(90deg) translateY(-50%);color:#1e2f55;letter-spacing:0;font-size:11.500px">Proprietà</div>
<svg style="left:1747px;top:296px" width="14" height="14" viewBox="0 0 14 14"><rect width="14" height="14" fill="#1a7cbc"/><path d="M0 7h14M7 0v14" stroke="#9ac4e4" stroke-width=".8"/><g stroke="#fff" stroke-width="1.100"><path d="M2 2.200l3 3M5 2.200l-3 3M8.500 3.500h4M10.500 1.500v4M2.500 9.500h2M2.500 11.500h2M10.500 8.500v4"/></g></svg>
<div class="t t12" style="left:1754px;top:312px;transform-origin:0 0;transform:rotate(90deg) translateY(-50%);color:#1e2f55;letter-spacing:-.3px">Risultati calcolo</div>
<!-- bottom bar -->
<div class="abs" style="left:333px;top:939px;width:933px;height:35px;background:#cfdcee"></div>
<div class="abs" style="left:334px;top:942px;width:459px;height:29px;background:linear-gradient(#dde8f6,#d3e0f1 45%,#c5d5eb);border-top:1px solid #e8f0fa;border-bottom:1px solid #b4c6e0"></div>
<div class="abs" style="left:796px;top:941px;width:469px;height:32px;background:#d3e0f1;border:1px solid #a3b9d8;border-radius:3px"></div>
<div class="abs" style="left:336px;top:946px;width:26px;height:22px;border:1px solid #d6a43c;border-radius:3px;background:linear-gradient(#ffeb94,#ffd85e 55%,#ffe98a)"></div>
<div class="abs" style="left:388px;top:946px;width:26px;height:22px;border:1px solid #d6a43c;border-radius:3px;background:linear-gradient(#ffeb94,#ffd85e 55%,#ffe98a)"></div>
<div class="abs" style="left:414px;top:946px;width:26px;height:22px;border:1px solid #d6a43c;border-radius:3px;background:linear-gradient(#ffeb94,#ffd85e 55%,#ffe98a)"></div>
<svg style="left:339.0px;top:947.0px" width="20" height="20" viewBox="0 0 20 20"><path d="M4.500 15.500l11-11" stroke="#2a86c0" stroke-width="1.200"/><circle cx="4.5" cy="15.5" r="1.9" fill="#fff" stroke="#f0788a" stroke-width="1.100"/><circle cx="15.5" cy="4.5" r="1.9" fill="#fff" stroke="#f0788a" stroke-width="1.100"/></svg>
<svg style="left:365.0px;top:947.0px" width="20" height="20" viewBox="0 0 20 20"><circle cx="10" cy="10" r="7.400" fill="#fff" stroke="#2a86c0" stroke-width="1.200"/><circle cx="10" cy="10" r="1.7" fill="#fff" stroke="#f0788a" stroke-width="1.100"/></svg>
<svg style="left:391.0px;top:947.0px" width="20" height="20" viewBox="0 0 20 20"><path d="M3.500 16.500l13-13" stroke="#2a86c0" stroke-width="1.200"/><circle cx="10" cy="10" r="1.9" fill="#fff" stroke="#f0788a" stroke-width="1.100"/></svg>
<svg style="left:417.0px;top:947.0px" width="20" height="20" viewBox="0 0 20 20"><path d="M10 3v10" stroke="#4a9a8a" stroke-width="1.400"/><path d="M3 14.500h14" stroke="#4a9a8a" stroke-width="1.200"/><circle cx="10" cy="14.5" r="1.9" fill="#fff" stroke="#f0788a" stroke-width="1.100"/></svg>
<svg style="left:443.0px;top:947.0px" width="20" height="20" viewBox="0 0 20 20"><path d="M3 17l13-13" stroke="#2a86c0" stroke-width="1.200"/><circle cx="11" cy="9" r="1.9" fill="#fff" stroke="#f0788a" stroke-width="1.100"/><ellipse cx="14.500" cy="12.500" rx="2" ry="1.600" fill="#fff" stroke="#2a86c0" stroke-width="1.100"/></svg>
<svg style="left:469.0px;top:947.0px" width="20" height="20" viewBox="0 0 20 20"><path d="M3 3l14 14M17 3l-14 14" stroke="#2a86c0" stroke-width="1.200"/><circle cx="10" cy="10" r="1.9" fill="#fff" stroke="#f0788a" stroke-width="1.100"/></svg>
<svg style="left:495.0px;top:947.0px" width="20" height="20" viewBox="0 0 20 20"><circle cx="10" cy="10" r="1.6" fill="#fff" stroke="#f0788a" stroke-width="1.100"/></svg>
<svg style="left:521.0px;top:947.0px" width="20" height="20" viewBox="0 0 20 20"><circle cx="10" cy="10" r="4.800" fill="#fff" stroke="#2a86c0" stroke-width="1.200"/><circle cx="10" cy="4.5" r="1.9" fill="#fff" stroke="#f0788a" stroke-width="1.100"/><circle cx="10" cy="15.5" r="1.9" fill="#fff" stroke="#f0788a" stroke-width="1.100"/><circle cx="4.5" cy="10" r="1.9" fill="#fff" stroke="#f0788a" stroke-width="1.100"/><circle cx="15.5" cy="10" r="1.9" fill="#fff" stroke="#f0788a" stroke-width="1.100"/></svg>
<svg style="left:547.0px;top:947.0px" width="20" height="20" viewBox="0 0 20 20"><circle cx="11" cy="11" r="5.800" fill="#fff" stroke="#2a86c0" stroke-width="1.300"/><path d="M3.500 8.500l3.500-1.500-.5 3.500" fill="none" stroke="#2a86c0" stroke-width="1.100"/><circle cx="7" cy="5.5" r="1.9" fill="#fff" stroke="#f0788a" stroke-width="1.100"/></svg>
<svg style="left:573.0px;top:947.0px" width="20" height="20" viewBox="0 0 20 20"><path d="M3 3l14 14" stroke="#2a86c0" stroke-width="1.200"/><path d="M17 3l-14 14" stroke="#2a86c0" stroke-width="1.200" stroke-dasharray="5 2"/><circle cx="10" cy="10" r="1.9" fill="#fff" stroke="#f0788a" stroke-width="1.100"/></svg>
<svg style="left:599.0px;top:947.0px" width="20" height="20" viewBox="0 0 20 20"><path d="M4.500 15.500v-6.500a4.500 4.500 0 0 1 9 0v6.500" fill="none" stroke="#2a86c0" stroke-width="3"/><path d="M3 13.500h3M12 13.500h3" stroke="#fff" stroke-width="1"/><path d="M10 2l6 6M16 2l-6 6" stroke="#f05a6a" stroke-width="1.600"/><circle cx="16" cy="14.5" r="1.6" fill="#fff" stroke="#f0788a" stroke-width="1.100"/></svg>
<div class="abs" style="left:624px;top:945px;width:2px;height:24px;background:linear-gradient(90deg,#b4c6e0 50%,#eef4fc 50%)"></div>
<svg style="left:630.0px;top:947.0px" width="20" height="20" viewBox="0 0 20 20"><path d="M3.500 3.500v12.500h14M3.500 11.500h4.500v4.500" fill="none" stroke="#2a86c0" stroke-width="1.200"/></svg>
<div class="t" style="left:806px;top:950px;color:#1e2f55;letter-spacing:0">Layers</div>
<div class="abs" style="left:852px;top:946px;width:324px;height:22px;background:#fff;border:1px solid #a3b9d8"></div>
<div class="abs" style="left:1160px;top:947px;width:15px;height:20px;background:linear-gradient(#e9f0fa,#d3e0f1);border-left:1px solid #a3b9d8"></div>
<svg style="left:1164px;top:955px" width="8" height="4" viewBox="0 0 8 4"><path d="M0 0h8l-4 4z" fill="#2a3a5a"/></svg>
<div class="t" style="left:855px;top:950px;color:#000;letter-spacing:0">0 - Default</div>
<div class="abs" style="left:1176px;top:946px;width:21px;height:22px;border:1px solid #a3b9d8;border-left:none;background:linear-gradient(#e3ecf8,#cfdcee)"></div>
<div class="abs" style="left:1197px;top:946px;width:20px;height:22px;border:1px solid #a3b9d8;border-left:none;background:linear-gradient(#e3ecf8,#cfdcee)"></div>
<svg style="left:1180px;top:948px" width="12" height="18" viewBox="0 0 12 18"><path d="M6 1a4.800 4.800 0 0 1 3 8.500q-1 1-1 3h-4q0-2-1-3a4.800 4.800 0 0 1 3-8.500z" fill="#ffd83a" stroke="#4a3a10" stroke-width="1"/><path d="M4 13.500h4v2l-1 1.500h-2l-1-1.500z" fill="#555" stroke="#222" stroke-width=".6"/></svg>
<svg style="left:1199px;top:949px" width="15" height="17" viewBox="0 0 15 17"><path d="M4 8v-3.500a3.500 3.500 0 0 1 7-.5" fill="none" stroke="#f0a85a" stroke-width="1.800"/><rect x="2" y="7.500" width="11" height="8.500" rx="1" fill="#f59b1e" stroke="#d07a08" stroke-width=".8"/></svg>
<div class="abs" style="left:1221px;top:946px;width:33px;height:17px;border:1px solid #a3b9d8;border-radius:2px;background:linear-gradient(#e3ecf8,#cfdcee)"></div>
<svg style="left:1229px;top:947px" width="18" height="15" viewBox="0 0 18 15"><rect x="5.500" y=".5" width="11" height="9.500" rx="1" fill="#cfe0f6" stroke="#8ab0e0" stroke-dasharray="1 1"/><rect x="3" y="2.500" width="11" height="9.500" rx="1" fill="#b8d2f2" stroke="#7aa4dc"/><rect x=".5" y="4.500" width="11" height="9.500" rx="1" fill="#9ac0ee" stroke="#4a84cc"/></svg>
</body>
</html>
